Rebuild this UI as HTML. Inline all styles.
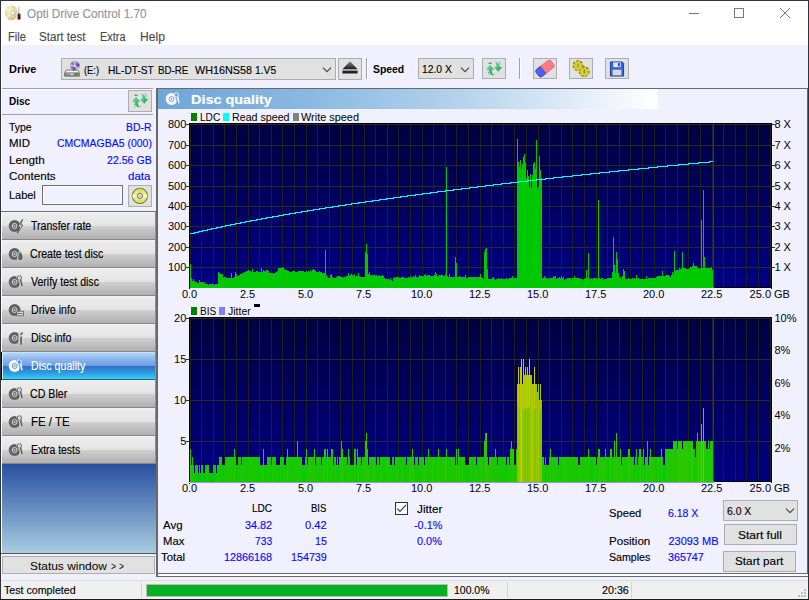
<!DOCTYPE html>
<html><head><meta charset="utf-8"><title>Opti Drive Control 1.70</title>
<style>
html,body{margin:0;padding:0;}
body{width:809px;height:600px;overflow:hidden;position:relative;background:#f0f0ff;font-family:"Liberation Sans",sans-serif;}
.b{position:absolute;display:block;}
.t{position:absolute;white-space:pre;line-height:normal;transform-origin:0 50%;}
.s{-webkit-text-stroke:0.14px currentColor;}
</style></head><body>
<div class="b" style="left:0px;top:0px;width:809px;height:600px;background:#f0f0ff;"></div>
<div class="b" style="left:0px;top:0px;width:809px;height:45px;background:#fff;"></div>
<div class="b" style="left:0px;top:45px;width:809px;height:1px;background:#f0f0f0;"></div>
<span class="t s" style="left:26.50px;top:6.94px;font-size:12px;color:#94949c;transform:scaleX(0.9800);">Opti Drive Control 1.70</span>
<span class="t s" style="left:7.90px;top:30.34px;font-size:12px;color:#4a4a4a;transform:scaleX(0.9258);">File</span>
<span class="t s" style="left:39.40px;top:30.34px;font-size:12px;color:#4a4a4a;transform:scaleX(0.9684);">Start test</span>
<span class="t s" style="left:100.00px;top:30.34px;font-size:12px;color:#4a4a4a;transform:scaleX(0.9105);">Extra</span>
<span class="t s" style="left:140.00px;top:30.34px;font-size:12px;color:#4a4a4a;transform:scaleX(1.0090);">Help</span>
<svg class="b" style="left:680px;top:0" width="128" height="30" viewBox="0 0 128 30">
<g stroke="#7a7a7a" stroke-width="1" fill="none" shape-rendering="crispEdges">
<line x1="9" y1="13.5" x2="19" y2="13.5"/>
<rect x="54.5" y="8.5" width="9" height="9"/></g>
<g stroke="#7a7a7a" stroke-width="1" fill="none"><line x1="100" y1="8" x2="110" y2="18"/><line x1="110" y1="8" x2="100" y2="18"/></g></svg>
<svg class="b" style="left:4px;top:4px" width="18" height="18" viewBox="4 4 18 18">
<defs><radialGradient id="tg" cx="0.42" cy="0.42" r="0.62"><stop offset="0" stop-color="#fff8d8"/><stop offset="0.55" stop-color="#eadf9f"/><stop offset="1" stop-color="#c8b878"/></radialGradient></defs>
<ellipse cx="11.3" cy="12.8" rx="6.3" ry="7.4" fill="url(#tg)"/>
<path d="M11.3 12.8 L5.4 9.4 L6.6 7.6 Z M11.3 12.8 L8.6 5.8 L11 5.4 Z M11.3 12.8 L7.2 19 L5.8 17 Z" fill="#fffbe6" opacity="0.7"/>
<circle cx="12.5" cy="12.8" r="2.1" fill="#f8f8f8" stroke="#b0b0b0" stroke-width="0.7"/><circle cx="12.6" cy="12.8" r="0.8" fill="#fff"/>
<path d="M15.6 7.4 L16.3 7.2 L16.9 20 L16.2 20.2 Z" fill="#fafafa" stroke="#c8c8c8" stroke-width="0.3"/>
<path d="M18.7 6.4 L19.3 6.4 L19.2 13.6 L18.3 13.6 Z" fill="#9a9a9a"/>
<path d="M17.7 13.8 Q19 13 20.3 13.8 L20.6 19 Q19 20.2 17.6 19.2 Z" fill="#5a0a08"/>
</svg>
<span class="t" style="left:9.10px;top:62.84px;font-size:11px;color:#000;font-weight:bold;transform:scaleX(0.9922);">Drive</span>
<div class="b" style="left:61px;top:58px;width:275px;height:22px;background:#e1e1e1;border:1px solid #adadad;box-sizing:border-box;"></div>
<span class="t s" style="left:84.00px;top:63.59px;font-size:11.5px;color:#000;transform:scaleX(0.8098);">(E:)</span>
<span class="t s" style="left:107.80px;top:63.59px;font-size:11.5px;color:#000;transform:scaleX(0.8851);">HL-DT-ST</span>
<span class="t s" style="left:158.40px;top:63.59px;font-size:11.5px;color:#000;transform:scaleX(0.8468);">BD-RE</span>
<span class="t s" style="left:195.10px;top:63.59px;font-size:11.5px;color:#000;transform:scaleX(0.9371);">WH16NS58</span>
<span class="t s" style="left:255.20px;top:63.59px;font-size:11.5px;color:#000;transform:scaleX(0.8962);">1.V5</span>
<svg class="b" style="left:322px;top:67.2px" width="10" height="6" viewBox="0 0 10 6"><path d="M1 0.7 L5 4.7 L9 0.7" fill="none" stroke="#444" stroke-width="1.1"/></svg>
<svg class="b" style="left:64px;top:61px" width="16" height="16" viewBox="0 0 16 16">
<path d="M2.4 9 L13.6 9 L15.6 11.4 L15.6 15.2 L0.6 15.2 L0.6 11.4 Z" fill="#f4f4f4" stroke="#5a5a5a" stroke-width="0.8"/>
<rect x="1" y="11.4" width="14.2" height="3.6" fill="#7c7c7c"/>
<rect x="2.4" y="12.4" width="7.4" height="1.2" fill="#b4b4b4"/><rect x="6.6" y="13" width="2.8" height="1" fill="#f0f0f0"/>
<path d="M12.4 11.6 L13.6 12.8 L12.4 14 L11.2 12.8 Z" fill="#10d810" stroke="#0a900a" stroke-width="0.5"/>
<path d="M8.8 0.2 L12.8 0.2 L15.4 2.8 L15.4 6.6 L12.8 9.4 L8.8 9.4 L6.2 6.6 L6.2 2.8 Z" fill="#8a72bc"/>
<path d="M10.8 4.8 L8.8 0.2 L12.8 0.2 Z M10.8 4.8 L15.4 6.6 L12.8 9.4 Z M10.8 4.8 L6.2 6.6 L6.2 2.8Z" fill="#c4b4e6"/>
<path d="M10.8 4.8 L15.4 2.8 L15.4 5 Z M10.8 4.8 L8.8 9.4 L10.6 9.4Z" fill="#5c4690"/>
<circle cx="10.8" cy="4.8" r="1.1" fill="#f4f0ff"/></svg>
<div class="b" style="left:338px;top:58px;width:24px;height:22px;background:#e1e1e1;border:1px solid #adadad;box-sizing:border-box;"></div>
<svg class="b" style="left:338px;top:58px" width="24" height="22" viewBox="0 0 24 22">
<defs><linearGradient id="ej" x1="0" y1="0" x2="0" y2="1"><stop offset="0" stop-color="#8a8a8a"/><stop offset="1" stop-color="#1a1a1a"/></linearGradient></defs>
<path d="M12 3.2 L19.6 11.2 L4.4 11.2 Z" fill="url(#ej)"/><rect x="4.4" y="12.6" width="15.2" height="2.9" fill="#222"/></svg>
<div class="b" style="left:366px;top:58px;width:1px;height:21px;background:#a0a0a0;"></div>
<div class="b" style="left:367px;top:58px;width:1px;height:21px;background:#fff;"></div>
<span class="t" style="left:373.00px;top:62.84px;font-size:11px;color:#000;font-weight:bold;transform:scaleX(0.9452);">Speed</span>
<div class="b" style="left:418px;top:58px;width:56px;height:21px;background:#e1e1e1;border:1px solid #adadad;box-sizing:border-box;"></div>
<span class="t s" style="left:422.40px;top:63.09px;font-size:11.5px;color:#000;transform:scaleX(0.8964);">12.0 X</span>
<svg class="b" style="left:460px;top:67px" width="10" height="6" viewBox="0 0 10 6"><path d="M1 0.7 L5 4.7 L9 0.7" fill="none" stroke="#444" stroke-width="1.1"/></svg>
<div class="b" style="left:482px;top:58px;width:24px;height:21px;background:#e1e1e1;border:1px solid #adadad;box-sizing:border-box;"></div>
<svg class="b" style="left:485px;top:59.5px" width="18" height="18" viewBox="0 0 18 18">
<defs><linearGradient id="rg1" x1="0" y1="0" x2="1" y2="1"><stop offset="0" stop-color="#7ae8a8"/><stop offset="1" stop-color="#08a048"/></linearGradient></defs>
<path d="M5.1 4.8 L9.3 9.8 L6.7 9.8 Q6.8 13 8.6 15.8 Q4 14.6 3.5 9.8 L0.8 9.8 Z" fill="url(#rg1)"/>
<path d="M13.3 11.8 L8.8 7 L11.5 7 Q11.6 3.8 9.8 1.2 Q14.4 2.2 14.8 7 L17.2 7 Z" fill="url(#rg1)"/>
<path d="M3.6 3.2 H6.6" stroke="#444" stroke-width="0.9" fill="none"/><path d="M3.2 12 L4.6 15.4 M9.4 13.6 L9.8 14.8 M14.4 1.6 L15.6 4.4" stroke="#555" stroke-width="0.7" stroke-dasharray="1 1" fill="none"/></svg>
<div class="b" style="left:519px;top:58px;width:1px;height:21px;background:#a0a0a0;"></div>
<div class="b" style="left:520px;top:58px;width:1px;height:21px;background:#fff;"></div>
<div class="b" style="left:533px;top:58px;width:24px;height:21px;background:#e1e1e1;border:1px solid #adadad;box-sizing:border-box;"></div>
<svg class="b" style="left:535px;top:59px" width="20" height="19" viewBox="0 0 20 19">
<g transform="rotate(-38 10 9.5)"><rect x="0.6" y="5" width="18.8" height="9" rx="2.4" fill="#ff7a86" stroke="#d05868" stroke-width="0.6"/>
<path d="M0.6 7.4 Q0.6 5 3 5 L7.6 5 L7.6 14 L3 14 Q0.6 14 0.6 11.6 Z" fill="#4a60f8" stroke="#2838b0" stroke-width="0.6"/></g></svg>
<div class="b" style="left:569px;top:58px;width:24px;height:21px;background:#e1e1e1;border:1px solid #adadad;box-sizing:border-box;"></div>
<svg class="b" style="left:571px;top:59px" width="20" height="19" viewBox="0 0 20 19">
<g fill="#d8cc18" stroke="#7a7000" stroke-width="1">
<circle cx="7" cy="6.6" r="3.9" stroke="#7a7200" stroke-dasharray="2.2 1.1" stroke-width="3" fill="#e0d618"/>
<circle cx="13.2" cy="12.6" r="3.9" stroke="#7a7200" stroke-dasharray="2.2 1.1" stroke-width="3" fill="#e0d618"/>
<circle cx="7" cy="6.6" r="3.7" stroke="#dcd214" stroke-dasharray="2.2 1.1" stroke-width="1.8" fill="#dcd214"/>
<circle cx="13.2" cy="12.6" r="3.7" stroke="#dcd214" stroke-dasharray="2.2 1.1" stroke-width="1.8" fill="#dcd214"/></g>
<rect x="6.3" y="4.4" width="1.5" height="4" fill="#666" stroke="#ccc" stroke-width="0.4"/><rect x="12.5" y="10.4" width="1.5" height="4" fill="#666" stroke="#ccc" stroke-width="0.4"/></svg>
<div class="b" style="left:605px;top:58px;width:24px;height:21px;background:#e1e1e1;border:1px solid #adadad;box-sizing:border-box;"></div>
<svg class="b" style="left:609px;top:60.5px" width="16" height="16" viewBox="0 0 16 17">
<path d="M1 1 L13.5 1 L15 2.5 L15 16 L1 16 Z" fill="#2a66e8" stroke="#1838a0" stroke-width="1"/>
<rect x="4" y="1.5" width="8" height="5" fill="#dfe8ff"/><rect x="9" y="2.2" width="2" height="3.4" fill="#2a48b0"/>
<rect x="3" y="9" width="10" height="6.5" fill="#d8d8d8" stroke="#667" stroke-width="0.5"/></svg>
<div class="b" style="left:1px;top:88px;width:152px;height:1px;background:#a0a0a0;"></div>
<div class="b" style="left:1px;top:89px;width:152px;height:1px;background:#fff;"></div>
<div class="b" style="left:1px;top:45px;width:1px;height:535px;background:#fff;"></div>
<span class="t" style="left:9.10px;top:95.05px;font-size:11px;color:#000;font-weight:bold;transform:scaleX(0.9081);">Disc</span>
<div class="b" style="left:128px;top:90px;width:24px;height:22px;background:#e1e1e1;border:1px solid #adadad;box-sizing:border-box;"></div>
<svg class="b" style="left:131px;top:92px" width="18" height="18" viewBox="0 0 18 18">
<defs><linearGradient id="rg2" x1="0" y1="0" x2="1" y2="1"><stop offset="0" stop-color="#7ae8a8"/><stop offset="1" stop-color="#08a048"/></linearGradient></defs>
<path d="M5.1 4.8 L9.3 9.8 L6.7 9.8 Q6.8 13 8.6 15.8 Q4 14.6 3.5 9.8 L0.8 9.8 Z" fill="url(#rg2)"/>
<path d="M13.3 11.8 L8.8 7 L11.5 7 Q11.6 3.8 9.8 1.2 Q14.4 2.2 14.8 7 L17.2 7 Z" fill="url(#rg2)"/>
<path d="M3.6 3.2 H6.6" stroke="#444" stroke-width="0.9" fill="none"/><path d="M3.2 12 L4.6 15.4 M9.4 13.6 L9.8 14.8 M14.4 1.6 L15.6 4.4" stroke="#555" stroke-width="0.7" stroke-dasharray="1 1" fill="none"/></svg>
<div class="b" style="left:2px;top:114px;width:151px;height:1px;background:#a0a0a0;"></div>
<span class="t s" style="left:8.90px;top:120.85px;font-size:11px;color:#000;transform:scaleX(0.9478);">Type</span>
<span class="t s" style="left:126.00px;top:120.85px;font-size:11px;color:#0a0aff;transform:scaleX(0.9484);">BD-R</span>
<span class="t s" style="left:8.90px;top:137.24px;font-size:11px;color:#000;transform:scaleX(1.0415);">MID</span>
<span class="t s" style="left:57.20px;top:137.24px;font-size:11px;color:#0a0aff;transform:scaleX(0.9525);">CMCMAGBA5 (000)</span>
<span class="t s" style="left:8.90px;top:153.84px;font-size:11px;color:#000;transform:scaleX(1.0642);">Length</span>
<span class="t s" style="left:106.80px;top:153.84px;font-size:11px;color:#0a0aff;transform:scaleX(0.9618);">22.56 GB</span>
<span class="t s" style="left:8.90px;top:169.84px;font-size:11px;color:#000;transform:scaleX(1.0608);">Contents</span>
<span class="t s" style="left:128.40px;top:169.84px;font-size:11px;color:#0a0aff;transform:scaleX(1.0511);">data</span>
<span class="t s" style="left:8.90px;top:189.04px;font-size:11px;color:#000;">Label</span>
<div class="b" style="left:42px;top:185px;width:81px;height:20px;background:#f0f0ff;border:1px solid #6e6e6e;box-shadow:inset 0 0 0 1px #fff;box-sizing:border-box;"></div>
<div class="b" style="left:128px;top:185px;width:24px;height:22px;background:#e1e1e1;border:1px solid #adadad;box-sizing:border-box;"></div>
<svg class="b" style="left:131px;top:187px" width="18" height="18" viewBox="0 0 18 18">
<defs><radialGradient id="yg" cx="0.5" cy="0.5" r="0.5"><stop offset="0" stop-color="#f4f4a8"/><stop offset="0.75" stop-color="#e6e67c"/><stop offset="1" stop-color="#c8c85a"/></radialGradient></defs>
<circle cx="8.9" cy="8.9" r="7.7" fill="url(#yg)" stroke="#5a5a30" stroke-width="0.9"/>
<path d="M8.9 8.9 L1.4 6.4 L1.4 11.4 Z M8.9 8.9 L16.4 6.4 L16.4 11.4 Z" fill="#fdfdc8" opacity="0.75"/>
<path d="M8.9 8.9 L6.6 1.6 L11.2 1.6 Z M8.9 8.9 L6.6 16.2 L11.2 16.2 Z" fill="#d4d45c" opacity="0.6"/>
<circle cx="8.9" cy="8.9" r="2.6" fill="#e4e8e0" stroke="#5c6c68" stroke-width="0.9"/><circle cx="8.9" cy="8.9" r="1.2" fill="#d0d0d0"/></svg>
<div class="b" style="left:1px;top:211px;width:155px;height:1px;background:#707070;"></div>
<div class="b" style="left:2px;top:212px;width:154px;height:27px;background:linear-gradient(#f6f6f6 0,#ededed 4%,#e4e4e4 50%,#d0d0d0 52%,#b0b0b0 100%);"></div>
<div class="b" style="left:2px;top:239px;width:154px;height:1px;background:#858585;"></div>
<svg class="b" style="left:7.2px;top:217.2px" width="20" height="18" viewBox="0 0 20 18"><circle cx="7.6" cy="9" r="5.9" fill="#626262"/><circle cx="7.6" cy="9" r="2.5" fill="none" stroke="#dcdcdc" stroke-width="1"/><circle cx="7.6" cy="9" r="0.9" fill="#dcdcdc"/><path d="M15.6 2.2 L10.6 9.8 L12.6 9.8 L10.4 16.2 L15.8 8 L13.6 8 Z" fill="#dcdcdc" stroke="#333" stroke-width="0.7"/></svg>
<span class="t s" style="left:30.60px;top:218.84px;font-size:12px;color:#000;transform:scaleX(0.8822);">Transfer rate</span>
<div class="b" style="left:2px;top:240px;width:154px;height:27px;background:linear-gradient(#f6f6f6 0,#ededed 4%,#e4e4e4 50%,#d0d0d0 52%,#b0b0b0 100%);"></div>
<div class="b" style="left:2px;top:267px;width:154px;height:1px;background:#858585;"></div>
<svg class="b" style="left:7.2px;top:245.2px" width="20" height="18" viewBox="0 0 20 18"><circle cx="7.6" cy="9" r="5.9" fill="#626262"/><circle cx="7.6" cy="9" r="2.5" fill="none" stroke="#dcdcdc" stroke-width="1"/><circle cx="7.6" cy="9" r="0.9" fill="#dcdcdc"/><path d="M12.6 5.5 Q16.6 9.5 16.2 13 Q15.6 16.4 12.8 15.8 Q10 15 10.6 12 Q11.2 10 12.6 5.5Z" fill="#626262" stroke="#dcdcdc" stroke-width="0.9"/></svg>
<span class="t s" style="left:30.00px;top:246.84px;font-size:12px;color:#000;transform:scaleX(0.8805);">Create test disc</span>
<div class="b" style="left:2px;top:268px;width:154px;height:27px;background:linear-gradient(#f6f6f6 0,#ededed 4%,#e4e4e4 50%,#d0d0d0 52%,#b0b0b0 100%);"></div>
<div class="b" style="left:2px;top:295px;width:154px;height:1px;background:#858585;"></div>
<svg class="b" style="left:7.2px;top:273.2px" width="20" height="18" viewBox="0 0 20 18"><circle cx="7.6" cy="9" r="5.9" fill="#626262"/><circle cx="7.6" cy="9" r="2.5" fill="none" stroke="#dcdcdc" stroke-width="1"/><circle cx="7.6" cy="9" r="0.9" fill="#dcdcdc"/><path d="M9 3.5 L14.5 2 L15 6.5 L11.5 8.5 Z" fill="#dcdcdc"/><circle cx="12.4" cy="5" r="2.2" fill="#dcdcdc" stroke="#626262" stroke-width="0.9"/><path d="M13.6 7 L15 13.2" stroke="#626262" stroke-width="1.5" fill="none"/><path d="M12.4 7.6 L13.4 13.4" stroke="#dcdcdc" stroke-width="1" fill="none"/></svg>
<span class="t s" style="left:30.60px;top:274.84px;font-size:12px;color:#000;transform:scaleX(0.8777);">Verify test disc</span>
<div class="b" style="left:2px;top:296px;width:154px;height:27px;background:linear-gradient(#f6f6f6 0,#ededed 4%,#e4e4e4 50%,#d0d0d0 52%,#b0b0b0 100%);"></div>
<div class="b" style="left:2px;top:323px;width:154px;height:1px;background:#858585;"></div>
<svg class="b" style="left:7.2px;top:301.2px" width="20" height="18" viewBox="0 0 20 18"><circle cx="7.6" cy="9" r="5.9" fill="#626262"/><circle cx="7.6" cy="9" r="2.5" fill="none" stroke="#dcdcdc" stroke-width="1"/><circle cx="7.6" cy="9" r="0.9" fill="#dcdcdc"/><rect x="10" y="10.2" width="6.6" height="4.6" fill="#dcdcdc" stroke="#626262" stroke-width="0.8"/><path d="M11.2 12.5 H15.4" stroke="#626262" stroke-width="1"/></svg>
<span class="t s" style="left:30.60px;top:302.84px;font-size:12px;color:#000;transform:scaleX(0.8840);">Drive info</span>
<div class="b" style="left:2px;top:324px;width:154px;height:27px;background:linear-gradient(#f6f6f6 0,#ededed 4%,#e4e4e4 50%,#d0d0d0 52%,#b0b0b0 100%);"></div>
<div class="b" style="left:2px;top:351px;width:154px;height:1px;background:#858585;"></div>
<svg class="b" style="left:7.2px;top:329.2px" width="20" height="18" viewBox="0 0 20 18"><circle cx="7.6" cy="9" r="5.9" fill="#626262"/><circle cx="7.6" cy="9" r="2.5" fill="none" stroke="#dcdcdc" stroke-width="1"/><circle cx="7.6" cy="9" r="0.9" fill="#dcdcdc"/><path d="M11.4 3 H16.4 V16 H11.4Z" fill="#dcdcdc" opacity="0.9"/><rect x="13.2" y="7.6" width="1.8" height="7" fill="#626262"/><path d="M12.2 15 H16" stroke="#626262" stroke-width="1"/><path d="M13.4 5.8 L15.6 3.6" stroke="#626262" stroke-width="1.6"/></svg>
<span class="t s" style="left:30.60px;top:330.84px;font-size:12px;color:#000;transform:scaleX(0.8780);">Disc info</span>
<div class="b" style="left:2px;top:352px;width:154px;height:27px;background:linear-gradient(#c4f0ff 0,#b6dafa 4%,#a4c8f4 12%,#6c9ce4 51%,#2e70ca 53%,#30a0e0 80%,#30d4f8 100%);"></div>
<div class="b" style="left:2px;top:379px;width:154px;height:1px;background:#305880;"></div>
<div class="b" style="left:1px;top:352px;width:1px;height:28px;background:#000;"></div>
<div class="b" style="left:2px;top:352px;width:1px;height:27px;background:#c8f8ff;"></div>
<svg class="b" style="left:7.2px;top:357.2px" width="20" height="18" viewBox="0 0 20 18"><circle cx="7.6" cy="9" r="5.9" fill="#fff"/><circle cx="7.6" cy="9" r="2.5" fill="none" stroke="#5a90dc" stroke-width="1"/><circle cx="7.6" cy="9" r="0.9" fill="#5a90dc"/><path d="M9 3.5 L14.5 2 L15 6.5 L11.5 8.5 Z" fill="#5a90dc"/><circle cx="12.4" cy="5" r="2.2" fill="#5a90dc" stroke="#fff" stroke-width="0.9"/><path d="M13.6 7 L15 13.2" stroke="#fff" stroke-width="1.5" fill="none"/><path d="M12.4 7.6 L13.4 13.4" stroke="#5a90dc" stroke-width="1" fill="none"/></svg>
<span class="t s" style="left:30.90px;top:358.84px;font-size:12px;color:#fff;transform:scaleX(0.8851);">Disc quality</span>
<div class="b" style="left:2px;top:380px;width:154px;height:27px;background:linear-gradient(#f6f6f6 0,#ededed 4%,#e4e4e4 50%,#d0d0d0 52%,#b0b0b0 100%);"></div>
<div class="b" style="left:2px;top:407px;width:154px;height:1px;background:#858585;"></div>
<svg class="b" style="left:7.2px;top:385.2px" width="20" height="18" viewBox="0 0 20 18"><circle cx="7.6" cy="9" r="5.9" fill="#626262"/><circle cx="7.6" cy="9" r="2.5" fill="none" stroke="#dcdcdc" stroke-width="1"/><circle cx="7.6" cy="9" r="0.9" fill="#dcdcdc"/><path d="M9 3.5 L14.5 2 L15 6.5 L11.5 8.5 Z" fill="#dcdcdc"/><circle cx="12.4" cy="5" r="2.2" fill="#dcdcdc" stroke="#626262" stroke-width="0.9"/><path d="M13.6 7 L15 13.2" stroke="#626262" stroke-width="1.5" fill="none"/><path d="M12.4 7.6 L13.4 13.4" stroke="#dcdcdc" stroke-width="1" fill="none"/></svg>
<span class="t s" style="left:30.00px;top:386.84px;font-size:12px;color:#000;transform:scaleX(0.8856);">CD Bler</span>
<div class="b" style="left:2px;top:408px;width:154px;height:27px;background:linear-gradient(#f6f6f6 0,#ededed 4%,#e4e4e4 50%,#d0d0d0 52%,#b0b0b0 100%);"></div>
<div class="b" style="left:2px;top:435px;width:154px;height:1px;background:#858585;"></div>
<svg class="b" style="left:7.2px;top:413.2px" width="20" height="18" viewBox="0 0 20 18"><circle cx="7.6" cy="9" r="5.9" fill="#626262"/><circle cx="7.6" cy="9" r="2.5" fill="none" stroke="#dcdcdc" stroke-width="1"/><circle cx="7.6" cy="9" r="0.9" fill="#dcdcdc"/><path d="M9 3.5 L14.5 2 L15 6.5 L11.5 8.5 Z" fill="#dcdcdc"/><circle cx="12.4" cy="5" r="2.2" fill="#dcdcdc" stroke="#626262" stroke-width="0.9"/><path d="M13.6 7 L15 13.2" stroke="#626262" stroke-width="1.5" fill="none"/><path d="M12.4 7.6 L13.4 13.4" stroke="#dcdcdc" stroke-width="1" fill="none"/></svg>
<span class="t s" style="left:30.60px;top:414.84px;font-size:12px;color:#000;transform:scaleX(0.9542);">FE / TE</span>
<div class="b" style="left:2px;top:436px;width:154px;height:27px;background:linear-gradient(#f6f6f6 0,#ededed 4%,#e4e4e4 50%,#d0d0d0 52%,#b0b0b0 100%);"></div>
<div class="b" style="left:2px;top:463px;width:154px;height:1px;background:#858585;"></div>
<svg class="b" style="left:7.2px;top:441.2px" width="20" height="18" viewBox="0 0 20 18"><circle cx="7.6" cy="9" r="5.9" fill="#626262"/><circle cx="7.6" cy="9" r="2.5" fill="none" stroke="#dcdcdc" stroke-width="1"/><circle cx="7.6" cy="9" r="0.9" fill="#dcdcdc"/><path d="M9 3.5 L14.5 2 L15 6.5 L11.5 8.5 Z" fill="#dcdcdc"/><circle cx="12.4" cy="5" r="2.2" fill="#dcdcdc" stroke="#626262" stroke-width="0.9"/><path d="M13.6 7 L15 13.2" stroke="#626262" stroke-width="1.5" fill="none"/><path d="M12.4 7.6 L13.4 13.4" stroke="#dcdcdc" stroke-width="1" fill="none"/></svg>
<span class="t s" style="left:30.60px;top:442.84px;font-size:12px;color:#000;transform:scaleX(0.8662);">Extra tests</span>
<div class="b" style="left:155px;top:212px;width:1px;height:252px;background:#909090;"></div>
<div class="b" style="left:2px;top:464px;width:154px;height:89px;background:linear-gradient(#2850a0,#a8cce0);"></div>
<div class="b" style="left:1px;top:553px;width:155px;height:1px;background:#555;"></div>
<div class="b" style="left:2px;top:556px;width:153px;height:18px;background:#e1e1e1;border:1px solid #adadad;box-sizing:border-box;"></div>
<span class="t" style="left:30.10px;top:559.75px;font-size:11px;color:#000;transform:scaleX(1.0843);">Status window</span>
<span class="t" style="left:111.00px;top:559.75px;font-size:11px;color:#000;transform:scaleX(0.7782);">&gt;</span>
<span class="t" style="left:119.30px;top:559.75px;font-size:11px;color:#000;transform:scaleX(0.7782);">&gt;</span>
<div class="b" style="left:156px;top:88px;width:652px;height:1px;background:#696969;"></div>
<div class="b" style="left:156px;top:88px;width:2px;height:489px;background:#696969;"></div>
<div class="b" style="left:807px;top:88px;width:1px;height:486px;background:#696969;"></div>
<div class="b" style="left:158px;top:573px;width:650px;height:1px;background:#696969;"></div>
<div class="b" style="left:158px;top:574px;width:649px;height:2px;background:#fff;"></div>
<div class="b" style="left:156px;top:576px;width:652px;height:1px;background:#696969;"></div>
<div class="b" style="left:158px;top:89px;width:500px;height:20px;background:linear-gradient(90deg,#6fa5d8 0,#8ab8e2 30%,#b4d2ec 60%,#ffffff 100%);"></div>
<svg class="b" style="left:164px;top:90px" width="20" height="18" viewBox="0 0 20 18"><circle cx="7.6" cy="9" r="5.9" fill="#fff"/><circle cx="7.6" cy="9" r="2.5" fill="none" stroke="#6fa5d8" stroke-width="1"/><circle cx="7.6" cy="9" r="0.9" fill="#6fa5d8"/><path d="M9 3.5 L14.5 2 L15 6.5 L11.5 8.5 Z" fill="#6fa5d8"/><circle cx="12.4" cy="5" r="2.2" fill="#6fa5d8" stroke="#fff" stroke-width="0.9"/><path d="M13.6 7 L15 13.2" stroke="#fff" stroke-width="1.5" fill="none"/><path d="M12.4 7.6 L13.4 13.4" stroke="#6fa5d8" stroke-width="1" fill="none"/></svg>
<span class="t s" style="left:190.90px;top:92.03px;font-size:13px;color:#fff;font-weight:bold;transform:scaleX(1.1074);">Disc quality</span>
<svg class="b" style="left:189px;top:123px" width="583" height="166" viewBox="189 123 583 166" shape-rendering="crispEdges"><defs><linearGradient id="bg1" x1="0" y1="0" x2="0" y2="1"><stop offset="0" stop-color="#000040"/><stop offset="1" stop-color="#000084"/></linearGradient></defs><rect x="189" y="123" width="583" height="165" fill="url(#bg1)"/><rect x="190" y="124" width="1" height="164" fill="#1f1f1f"/><rect x="201" y="124" width="1" height="164" fill="#1f1f1f"/><rect x="213" y="124" width="1" height="164" fill="#1f1f1f"/><rect x="224" y="124" width="1" height="164" fill="#1f1f1f"/><rect x="236" y="124" width="1" height="164" fill="#1f1f1f"/><rect x="248" y="124" width="1" height="164" fill="#1f1f1f"/><rect x="259" y="124" width="1" height="164" fill="#1f1f1f"/><rect x="271" y="124" width="1" height="164" fill="#1f1f1f"/><rect x="282" y="124" width="1" height="164" fill="#1f1f1f"/><rect x="294" y="124" width="1" height="164" fill="#1f1f1f"/><rect x="306" y="124" width="1" height="164" fill="#1f1f1f"/><rect x="317" y="124" width="1" height="164" fill="#1f1f1f"/><rect x="329" y="124" width="1" height="164" fill="#1f1f1f"/><rect x="340" y="124" width="1" height="164" fill="#1f1f1f"/><rect x="352" y="124" width="1" height="164" fill="#1f1f1f"/><rect x="364" y="124" width="1" height="164" fill="#1f1f1f"/><rect x="375" y="124" width="1" height="164" fill="#1f1f1f"/><rect x="387" y="124" width="1" height="164" fill="#1f1f1f"/><rect x="398" y="124" width="1" height="164" fill="#1f1f1f"/><rect x="410" y="124" width="1" height="164" fill="#1f1f1f"/><rect x="422" y="124" width="1" height="164" fill="#1f1f1f"/><rect x="433" y="124" width="1" height="164" fill="#1f1f1f"/><rect x="445" y="124" width="1" height="164" fill="#1f1f1f"/><rect x="456" y="124" width="1" height="164" fill="#1f1f1f"/><rect x="468" y="124" width="1" height="164" fill="#1f1f1f"/><rect x="480" y="124" width="1" height="164" fill="#1f1f1f"/><rect x="491" y="124" width="1" height="164" fill="#1f1f1f"/><rect x="503" y="124" width="1" height="164" fill="#1f1f1f"/><rect x="514" y="124" width="1" height="164" fill="#1f1f1f"/><rect x="526" y="124" width="1" height="164" fill="#1f1f1f"/><rect x="538" y="124" width="1" height="164" fill="#1f1f1f"/><rect x="549" y="124" width="1" height="164" fill="#1f1f1f"/><rect x="561" y="124" width="1" height="164" fill="#1f1f1f"/><rect x="572" y="124" width="1" height="164" fill="#1f1f1f"/><rect x="584" y="124" width="1" height="164" fill="#1f1f1f"/><rect x="596" y="124" width="1" height="164" fill="#1f1f1f"/><rect x="607" y="124" width="1" height="164" fill="#1f1f1f"/><rect x="619" y="124" width="1" height="164" fill="#1f1f1f"/><rect x="630" y="124" width="1" height="164" fill="#1f1f1f"/><rect x="642" y="124" width="1" height="164" fill="#1f1f1f"/><rect x="654" y="124" width="1" height="164" fill="#1f1f1f"/><rect x="665" y="124" width="1" height="164" fill="#1f1f1f"/><rect x="677" y="124" width="1" height="164" fill="#1f1f1f"/><rect x="688" y="124" width="1" height="164" fill="#1f1f1f"/><rect x="700" y="124" width="1" height="164" fill="#1f1f1f"/><rect x="712" y="124" width="1" height="164" fill="#1f1f1f"/><rect x="723" y="124" width="1" height="164" fill="#1f1f1f"/><rect x="735" y="124" width="1" height="164" fill="#1f1f1f"/><rect x="746" y="124" width="1" height="164" fill="#1f1f1f"/><rect x="758" y="124" width="1" height="164" fill="#1f1f1f"/><rect x="770" y="124" width="1" height="164" fill="#1f1f1f"/><rect x="190" y="124" width="581" height="1" fill="#2a2a24"/><rect x="190" y="145" width="581" height="1" fill="#2a2a24"/><rect x="190" y="165" width="581" height="1" fill="#2a2a24"/><rect x="190" y="186" width="581" height="1" fill="#2a2a24"/><rect x="190" y="206" width="581" height="1" fill="#2a2a24"/><rect x="190" y="226" width="581" height="1" fill="#2a2a24"/><rect x="190" y="247" width="581" height="1" fill="#2a2a24"/><rect x="190" y="267" width="581" height="1" fill="#2a2a24"/><rect x="189" y="287" width="583" height="1" fill="#000"/><path d="M190 288V264h1V288zM191 288V278h1V288zM192 288V281h1V288zM193 288V279h1V288zM194 288V281h1V288zM195 288V282h1V288zM196 288V282h1V288zM197 288V283h1V288zM198 288V283h1V288zM199 288V280h1V288zM200 288V282h1V288zM201 288V282h1V288zM202 288V282h1V288zM203 288V283h1V288zM204 288V282h1V288zM205 288V284h1V288zM206 288V284h1V288zM207 288V284h1V288zM208 288V285h1V288zM209 288V284h1V288zM210 288V284h1V288zM211 288V284h1V288zM212 288V284h1V288zM213 288V284h1V288zM214 288V285h1V288zM215 288V284h1V288zM216 288V284h1V288zM217 288V284h1V288zM218 288V272h1V288zM219 288V273h1V288zM220 288V274h1V288zM221 288V274h1V288zM222 288V274h1V288zM223 288V278h1V288zM224 288V277h1V288zM225 288V277h1V288zM226 288V278h1V288zM227 288V278h1V288zM228 288V278h1V288zM229 288V278h1V288zM230 288V278h1V288zM231 288V273h1V288zM232 288V278h1V288zM233 288V278h1V288zM234 288V277h1V288zM235 288V272h1V288zM236 288V274h1V288zM237 288V276h1V288zM238 288V276h1V288zM239 288V275h1V288zM240 288V274h1V288zM241 288V274h1V288zM242 288V273h1V288zM243 288V273h1V288zM244 288V272h1V288zM245 288V272h1V288zM246 288V271h1V288zM247 288V271h1V288zM248 288V270h1V288zM249 288V271h1V288zM250 288V271h1V288zM251 288V272h1V288zM252 288V269h1V288zM253 288V272h1V288zM254 288V272h1V288zM255 288V272h1V288zM256 288V271h1V288zM257 288V271h1V288zM258 288V272h1V288zM259 288V272h1V288zM260 288V272h1V288zM261 288V268h1V288zM262 288V272h1V288zM263 288V270h1V288zM264 288V271h1V288zM265 288V272h1V288zM266 288V270h1V288zM267 288V270h1V288zM268 288V271h1V288zM269 288V273h1V288zM270 288V273h1V288zM271 288V273h1V288zM272 288V273h1V288zM273 288V274h1V288zM274 288V273h1V288zM275 288V273h1V288zM276 288V272h1V288zM277 288V271h1V288zM278 288V268h1V288zM279 288V268h1V288zM280 288V268h1V288zM281 288V268h1V288zM282 288V267h1V288zM283 288V268h1V288zM284 288V269h1V288zM285 288V270h1V288zM286 288V270h1V288zM287 288V271h1V288zM288 288V271h1V288zM289 288V272h1V288zM290 288V272h1V288zM291 288V272h1V288zM292 288V271h1V288zM293 288V271h1V288zM294 288V271h1V288zM295 288V272h1V288zM296 288V272h1V288zM297 288V272h1V288zM298 288V271h1V288zM299 288V271h1V288zM300 288V271h1V288zM301 288V271h1V288zM302 288V271h1V288zM303 288V271h1V288zM304 288V272h1V288zM305 288V272h1V288zM306 288V271h1V288zM307 288V272h1V288zM308 288V271h1V288zM309 288V272h1V288zM310 288V270h1V288zM311 288V272h1V288zM312 288V270h1V288zM313 288V269h1V288zM314 288V270h1V288zM315 288V271h1V288zM316 288V272h1V288zM317 288V272h1V288zM318 288V272h1V288zM319 288V271h1V288zM320 288V272h1V288zM321 288V272h1V288zM322 288V273h1V288zM323 288V273h1V288zM324 288V273h1V288zM325 288V250h1V288zM326 288V275h1V288zM327 288V277h1V288zM328 288V278h1V288zM329 288V278h1V288zM330 288V275h1V288zM331 288V274h1V288zM332 288V277h1V288zM333 288V278h1V288zM334 288V278h1V288zM335 288V278h1V288zM336 288V277h1V288zM337 288V276h1V288zM338 288V276h1V288zM339 288V276h1V288zM340 288V277h1V288zM341 288V277h1V288zM342 288V277h1V288zM343 288V278h1V288zM344 288V277h1V288zM345 288V277h1V288zM346 288V276h1V288zM347 288V276h1V288zM348 288V273h1V288zM349 288V276h1V288zM350 288V275h1V288zM351 288V274h1V288zM352 288V275h1V288zM353 288V276h1V288zM354 288V274h1V288zM355 288V277h1V288zM356 288V276h1V288zM357 288V276h1V288zM358 288V273h1V288zM359 288V276h1V288zM360 288V277h1V288zM361 288V277h1V288zM362 288V277h1V288zM363 288V277h1V288zM364 288V277h1V288zM365 288V252h1V288zM366 288V244h1V288zM367 288V254h1V288zM368 288V274h1V288zM369 288V272h1V288zM370 288V275h1V288zM371 288V276h1V288zM372 288V275h1V288zM373 288V275h1V288zM374 288V275h1V288zM375 288V276h1V288zM376 288V275h1V288zM377 288V276h1V288zM378 288V276h1V288zM379 288V275h1V288zM380 288V276h1V288zM381 288V276h1V288zM382 288V275h1V288zM383 288V276h1V288zM384 288V278h1V288zM385 288V279h1V288zM386 288V279h1V288zM387 288V279h1V288zM388 288V279h1V288zM389 288V280h1V288zM390 288V278h1V288zM391 288V280h1V288zM392 288V281h1V288zM393 288V278h1V288zM394 288V277h1V288zM395 288V278h1V288zM396 288V277h1V288zM397 288V277h1V288zM398 288V277h1V288zM399 288V278h1V288zM400 288V278h1V288zM401 288V277h1V288zM402 288V277h1V288zM403 288V277h1V288zM404 288V278h1V288zM405 288V278h1V288zM406 288V278h1V288zM407 288V278h1V288zM408 288V277h1V288zM409 288V278h1V288zM410 288V276h1V288zM411 288V278h1V288zM412 288V277h1V288zM413 288V276h1V288zM414 288V277h1V288zM415 288V275h1V288zM416 288V277h1V288zM417 288V278h1V288zM418 288V277h1V288zM419 288V275h1V288zM420 288V276h1V288zM421 288V276h1V288zM422 288V276h1V288zM423 288V276h1V288zM424 288V275h1V288zM425 288V274h1V288zM426 288V276h1V288zM427 288V275h1V288zM428 288V275h1V288zM429 288V275h1V288zM430 288V276h1V288zM431 288V276h1V288zM432 288V276h1V288zM433 288V276h1V288zM434 288V275h1V288zM435 288V272h1V288zM436 288V274h1V288zM437 288V276h1V288zM438 288V276h1V288zM439 288V275h1V288zM440 288V275h1V288zM441 288V275h1V288zM442 288V275h1V288zM443 288V276h1V288zM444 288V276h1V288zM445 288V274h1V288zM446 288V167h1V288zM447 288V276h1V288zM448 288V277h1V288zM449 288V274h1V288zM450 288V277h1V288zM451 288V277h1V288zM452 288V277h1V288zM453 288V277h1V288zM454 288V277h1V288zM455 288V257h1V288zM456 288V263h1V288zM457 288V277h1V288zM458 288V277h1V288zM459 288V276h1V288zM460 288V277h1V288zM461 288V277h1V288zM462 288V277h1V288zM463 288V277h1V288zM464 288V277h1V288zM465 288V275h1V288zM466 288V278h1V288zM467 288V278h1V288zM468 288V277h1V288zM469 288V277h1V288zM470 288V277h1V288zM471 288V277h1V288zM472 288V277h1V288zM473 288V277h1V288zM474 288V277h1V288zM475 288V277h1V288zM476 288V277h1V288zM477 288V278h1V288zM478 288V277h1V288zM479 288V277h1V288zM480 288V274h1V288zM481 288V277h1V288zM482 288V278h1V288zM483 288V279h1V288zM484 288V252h1V288zM485 288V249h1V288zM486 288V248h1V288zM487 288V269h1V288zM488 288V279h1V288zM489 288V279h1V288zM490 288V279h1V288zM491 288V279h1V288zM492 288V278h1V288zM493 288V277h1V288zM494 288V279h1V288zM495 288V280h1V288zM496 288V279h1V288zM497 288V279h1V288zM498 288V278h1V288zM499 288V279h1V288zM500 288V279h1V288zM501 288V278h1V288zM502 288V279h1V288zM503 288V279h1V288zM504 288V279h1V288zM505 288V279h1V288zM506 288V278h1V288zM507 288V279h1V288zM508 288V279h1V288zM509 288V278h1V288zM510 288V278h1V288zM511 288V278h1V288zM512 288V276h1V288zM513 288V278h1V288zM514 288V278h1V288zM515 288V278h1V288zM516 288V278h1V288zM517 288V139h1V288zM518 288V162h1V288zM519 288V167h1V288zM520 288V160h1V288zM521 288V169h1V288zM522 288V164h1V288zM523 288V157h1V288zM524 288V154h1V288zM525 288V163h1V288zM526 288V178h1V288zM527 288V170h1V288zM528 288V176h1V288zM529 288V188h1V288zM530 288V174h1V288zM531 288V188h1V288zM532 288V175h1V288zM533 288V164h1V288zM534 288V162h1V288zM535 288V169h1V288zM536 288V140h1V288zM537 288V189h1V288zM538 288V187h1V288zM539 288V156h1V288zM540 288V170h1V288zM541 288V178h1V288zM542 288V278h1V288zM543 288V278h1V288zM544 288V276h1V288zM545 288V278h1V288zM546 288V278h1V288zM547 288V278h1V288zM548 288V279h1V288zM549 288V278h1V288zM550 288V278h1V288zM551 288V278h1V288zM552 288V278h1V288zM553 288V276h1V288zM554 288V277h1V288zM555 288V276h1V288zM556 288V279h1V288zM557 288V278h1V288zM558 288V278h1V288zM559 288V277h1V288zM560 288V278h1V288zM561 288V276h1V288zM562 288V278h1V288zM563 288V277h1V288zM564 288V280h1V288zM565 288V279h1V288zM566 288V279h1V288zM567 288V278h1V288zM568 288V278h1V288zM569 288V278h1V288zM570 288V278h1V288zM571 288V279h1V288zM572 288V278h1V288zM573 288V278h1V288zM574 288V276h1V288zM575 288V278h1V288zM576 288V278h1V288zM577 288V278h1V288zM578 288V278h1V288zM579 288V278h1V288zM580 288V279h1V288zM581 288V279h1V288zM582 288V279h1V288zM583 288V280h1V288zM584 288V279h1V288zM585 288V278h1V288zM586 288V270h1V288zM587 288V278h1V288zM588 288V253h1V288zM589 288V278h1V288zM590 288V279h1V288zM591 288V278h1V288zM592 288V279h1V288zM593 288V278h1V288zM594 288V278h1V288zM595 288V278h1V288zM596 288V278h1V288zM597 288V279h1V288zM598 288V200h1V288zM599 288V278h1V288zM600 288V279h1V288zM601 288V278h1V288zM602 288V278h1V288zM603 288V280h1V288zM604 288V279h1V288zM605 288V279h1V288zM606 288V279h1V288zM607 288V278h1V288zM608 288V278h1V288zM609 288V278h1V288zM610 288V278h1V288zM611 288V278h1V288zM612 288V272h1V288zM613 288V237h1V288zM614 288V265h1V288zM615 288V273h1V288zM616 288V252h1V288zM617 288V259h1V288zM618 288V273h1V288zM619 288V278h1V288zM620 288V277h1V288zM621 288V279h1V288zM622 288V276h1V288zM623 288V269h1V288zM624 288V271h1V288zM625 288V279h1V288zM626 288V279h1V288zM627 288V279h1V288zM628 288V278h1V288zM629 288V279h1V288zM630 288V279h1V288zM631 288V279h1V288zM632 288V278h1V288zM633 288V279h1V288zM634 288V278h1V288zM635 288V279h1V288zM636 288V275h1V288zM637 288V278h1V288zM638 288V278h1V288zM639 288V279h1V288zM640 288V279h1V288zM641 288V279h1V288zM642 288V279h1V288zM643 288V279h1V288zM644 288V279h1V288zM645 288V279h1V288zM646 288V276h1V288zM647 288V279h1V288zM648 288V278h1V288zM649 288V278h1V288zM650 288V278h1V288zM651 288V278h1V288zM652 288V278h1V288zM653 288V278h1V288zM654 288V278h1V288zM655 288V278h1V288zM656 288V277h1V288zM657 288V276h1V288zM658 288V276h1V288zM659 288V276h1V288zM660 288V276h1V288zM661 288V276h1V288zM662 288V271h1V288zM663 288V276h1V288zM664 288V276h1V288zM665 288V276h1V288zM666 288V275h1V288zM667 288V275h1V288zM668 288V275h1V288zM669 288V276h1V288zM670 288V277h1V288zM671 288V275h1V288zM672 288V272h1V288zM673 288V274h1V288zM674 288V251h1V288zM675 288V271h1V288zM676 288V270h1V288zM677 288V270h1V288zM678 288V270h1V288zM679 288V268h1V288zM680 288V269h1V288zM681 288V268h1V288zM682 288V252h1V288zM683 288V267h1V288zM684 288V268h1V288zM685 288V268h1V288zM686 288V269h1V288zM687 288V269h1V288zM688 288V269h1V288zM689 288V268h1V288zM690 288V267h1V288zM691 288V267h1V288zM692 288V266h1V288zM693 288V263h1V288zM694 288V266h1V288zM695 288V266h1V288zM696 288V266h1V288zM697 288V268h1V288zM698 288V268h1V288zM699 288V269h1V288zM700 288V268h1V288zM701 288V220h1V288zM702 288V268h1V288zM703 288V190h1V288zM704 288V257h1V288zM705 288V268h1V288zM706 288V268h1V288zM707 288V268h1V288zM708 288V268h1V288zM709 288V268h1V288zM710 288V268h1V288zM711 288V267h1V288zM712 288V270h1V288zM713 288V270h1V288z" fill="#00c800"/><rect x="713" y="124" width="1" height="163" fill="#900090"/><path d="M190 233h1v1h-1zM191 233h1v1h-1zM192 233h1v1h-1zM193 233h1v1h-1zM194 233h1v1h-1zM194 232h1v2h-1zM195 232h1v1h-1zM196 232h1v1h-1zM197 232h1v1h-1zM198 232h1v1h-1zM198 231h1v2h-1zM199 231h1v1h-1zM200 231h1v1h-1zM201 231h1v1h-1zM202 231h1v1h-1zM202 230h1v2h-1zM203 230h1v1h-1zM204 230h1v1h-1zM205 230h1v1h-1zM206 230h1v1h-1zM207 230h1v1h-1zM207 229h1v2h-1zM208 229h1v1h-1zM209 229h1v1h-1zM210 229h1v1h-1zM211 229h1v1h-1zM211 228h1v2h-1zM212 228h1v1h-1zM213 228h1v1h-1zM214 228h1v1h-1zM215 228h1v1h-1zM216 228h1v1h-1zM216 227h1v2h-1zM217 227h1v1h-1zM218 227h1v1h-1zM219 227h1v1h-1zM220 227h1v1h-1zM221 227h1v1h-1zM221 226h1v2h-1zM222 226h1v1h-1zM223 226h1v1h-1zM224 226h1v1h-1zM225 226h1v1h-1zM225 225h1v2h-1zM226 225h1v1h-1zM227 225h1v1h-1zM228 225h1v1h-1zM229 225h1v1h-1zM230 225h1v1h-1zM230 224h1v2h-1zM231 224h1v1h-1zM232 224h1v1h-1zM233 224h1v1h-1zM234 224h1v1h-1zM235 224h1v1h-1zM235 223h1v2h-1zM236 223h1v1h-1zM237 223h1v1h-1zM238 223h1v1h-1zM239 223h1v1h-1zM240 223h1v1h-1zM240 222h1v2h-1zM241 222h1v1h-1zM242 222h1v1h-1zM243 222h1v1h-1zM244 222h1v1h-1zM245 222h1v1h-1zM245 221h1v2h-1zM246 221h1v1h-1zM247 221h1v1h-1zM248 221h1v1h-1zM249 221h1v1h-1zM250 221h1v1h-1zM250 220h1v2h-1zM251 220h1v1h-1zM252 220h1v1h-1zM253 220h1v1h-1zM254 220h1v1h-1zM255 220h1v1h-1zM256 220h1v1h-1zM256 219h1v2h-1zM257 219h1v1h-1zM258 219h1v1h-1zM259 219h1v1h-1zM260 219h1v1h-1zM261 219h1v1h-1zM261 218h1v2h-1zM262 218h1v1h-1zM263 218h1v1h-1zM264 218h1v1h-1zM265 218h1v1h-1zM266 218h1v1h-1zM266 217h1v2h-1zM267 217h1v1h-1zM268 217h1v1h-1zM269 217h1v1h-1zM270 217h1v1h-1zM271 217h1v1h-1zM272 217h1v1h-1zM272 216h1v2h-1zM273 216h1v1h-1zM274 216h1v1h-1zM275 216h1v1h-1zM276 216h1v1h-1zM277 216h1v1h-1zM278 216h1v1h-1zM278 215h1v2h-1zM279 215h1v1h-1zM280 215h1v1h-1zM281 215h1v1h-1zM282 215h1v1h-1zM283 215h1v1h-1zM283 214h1v2h-1zM284 214h1v1h-1zM285 214h1v1h-1zM286 214h1v1h-1zM287 214h1v1h-1zM288 214h1v1h-1zM289 214h1v1h-1zM289 213h1v2h-1zM290 213h1v1h-1zM291 213h1v1h-1zM292 213h1v1h-1zM293 213h1v1h-1zM294 213h1v1h-1zM295 213h1v1h-1zM295 212h1v2h-1zM296 212h1v1h-1zM297 212h1v1h-1zM298 212h1v1h-1zM299 212h1v1h-1zM300 212h1v1h-1zM301 212h1v1h-1zM301 211h1v2h-1zM302 211h1v1h-1zM303 211h1v1h-1zM304 211h1v1h-1zM305 211h1v1h-1zM306 211h1v1h-1zM307 211h1v1h-1zM307 210h1v2h-1zM308 210h1v1h-1zM309 210h1v1h-1zM310 210h1v1h-1zM311 210h1v1h-1zM312 210h1v1h-1zM313 210h1v1h-1zM313 209h1v2h-1zM314 209h1v1h-1zM315 209h1v1h-1zM316 209h1v1h-1zM317 209h1v1h-1zM318 209h1v1h-1zM319 209h1v1h-1zM319 208h1v2h-1zM320 208h1v1h-1zM321 208h1v1h-1zM322 208h1v1h-1zM323 208h1v1h-1zM324 208h1v1h-1zM325 208h1v1h-1zM325 207h1v2h-1zM326 207h1v1h-1zM327 207h1v1h-1zM328 207h1v1h-1zM329 207h1v1h-1zM330 207h1v1h-1zM331 207h1v1h-1zM332 207h1v1h-1zM332 206h1v2h-1zM333 206h1v1h-1zM334 206h1v1h-1zM335 206h1v1h-1zM336 206h1v1h-1zM337 206h1v1h-1zM338 206h1v1h-1zM338 205h1v2h-1zM339 205h1v1h-1zM340 205h1v1h-1zM341 205h1v1h-1zM342 205h1v1h-1zM343 205h1v1h-1zM344 205h1v1h-1zM345 205h1v1h-1zM345 204h1v2h-1zM346 204h1v1h-1zM347 204h1v1h-1zM348 204h1v1h-1zM349 204h1v1h-1zM350 204h1v1h-1zM351 204h1v1h-1zM351 203h1v2h-1zM352 203h1v1h-1zM353 203h1v1h-1zM354 203h1v1h-1zM355 203h1v1h-1zM356 203h1v1h-1zM357 203h1v1h-1zM358 203h1v1h-1zM358 202h1v2h-1zM359 202h1v1h-1zM360 202h1v1h-1zM361 202h1v1h-1zM362 202h1v1h-1zM363 202h1v1h-1zM364 202h1v1h-1zM365 202h1v1h-1zM365 201h1v2h-1zM366 201h1v1h-1zM367 201h1v1h-1zM368 201h1v1h-1zM369 201h1v1h-1zM370 201h1v1h-1zM371 201h1v1h-1zM372 201h1v1h-1zM372 200h1v2h-1zM373 200h1v1h-1zM374 200h1v1h-1zM375 200h1v1h-1zM376 200h1v1h-1zM377 200h1v1h-1zM378 200h1v1h-1zM379 200h1v1h-1zM379 199h1v2h-1zM380 199h1v1h-1zM381 199h1v1h-1zM382 199h1v1h-1zM383 199h1v1h-1zM384 199h1v1h-1zM385 199h1v1h-1zM386 199h1v1h-1zM386 198h1v2h-1zM387 198h1v1h-1zM388 198h1v1h-1zM389 198h1v1h-1zM390 198h1v1h-1zM391 198h1v1h-1zM392 198h1v1h-1zM393 198h1v1h-1zM393 197h1v2h-1zM394 197h1v1h-1zM395 197h1v1h-1zM396 197h1v1h-1zM397 197h1v1h-1zM398 197h1v1h-1zM399 197h1v1h-1zM400 197h1v1h-1zM400 196h1v2h-1zM401 196h1v1h-1zM402 196h1v1h-1zM403 196h1v1h-1zM404 196h1v1h-1zM405 196h1v1h-1zM406 196h1v1h-1zM407 196h1v1h-1zM407 195h1v2h-1zM408 195h1v1h-1zM409 195h1v1h-1zM410 195h1v1h-1zM411 195h1v1h-1zM412 195h1v1h-1zM413 195h1v1h-1zM414 195h1v1h-1zM415 195h1v1h-1zM415 194h1v2h-1zM416 194h1v1h-1zM417 194h1v1h-1zM418 194h1v1h-1zM419 194h1v1h-1zM420 194h1v1h-1zM421 194h1v1h-1zM422 194h1v1h-1zM422 193h1v2h-1zM423 193h1v1h-1zM424 193h1v1h-1zM425 193h1v1h-1zM426 193h1v1h-1zM427 193h1v1h-1zM428 193h1v1h-1zM429 193h1v1h-1zM430 193h1v1h-1zM430 192h1v2h-1zM431 192h1v1h-1zM432 192h1v1h-1zM433 192h1v1h-1zM434 192h1v1h-1zM435 192h1v1h-1zM436 192h1v1h-1zM437 192h1v1h-1zM437 191h1v2h-1zM438 191h1v1h-1zM439 191h1v1h-1zM440 191h1v1h-1zM441 191h1v1h-1zM442 191h1v1h-1zM443 191h1v1h-1zM444 191h1v1h-1zM445 191h1v1h-1zM445 190h1v2h-1zM446 190h1v1h-1zM447 190h1v1h-1zM448 190h1v1h-1zM449 190h1v1h-1zM450 190h1v1h-1zM451 190h1v1h-1zM452 190h1v1h-1zM453 190h1v1h-1zM453 189h1v2h-1zM454 189h1v1h-1zM455 189h1v1h-1zM456 189h1v1h-1zM457 189h1v1h-1zM458 189h1v1h-1zM459 189h1v1h-1zM460 189h1v1h-1zM461 189h1v1h-1zM461 188h1v2h-1zM462 188h1v1h-1zM463 188h1v1h-1zM464 188h1v1h-1zM465 188h1v1h-1zM466 188h1v1h-1zM467 188h1v1h-1zM468 188h1v1h-1zM469 188h1v1h-1zM469 187h1v2h-1zM470 187h1v1h-1zM471 187h1v1h-1zM472 187h1v1h-1zM473 187h1v1h-1zM474 187h1v1h-1zM475 187h1v1h-1zM476 187h1v1h-1zM477 187h1v1h-1zM477 186h1v2h-1zM478 186h1v1h-1zM479 186h1v1h-1zM480 186h1v1h-1zM481 186h1v1h-1zM482 186h1v1h-1zM483 186h1v1h-1zM484 186h1v1h-1zM485 186h1v1h-1zM485 185h1v2h-1zM486 185h1v1h-1zM487 185h1v1h-1zM488 185h1v1h-1zM489 185h1v1h-1zM490 185h1v1h-1zM491 185h1v1h-1zM492 185h1v1h-1zM493 185h1v1h-1zM493 184h1v2h-1zM494 184h1v1h-1zM495 184h1v1h-1zM496 184h1v1h-1zM497 184h1v1h-1zM498 184h1v1h-1zM499 184h1v1h-1zM500 184h1v1h-1zM501 184h1v1h-1zM501 183h1v2h-1zM502 183h1v1h-1zM503 183h1v1h-1zM504 183h1v1h-1zM505 183h1v1h-1zM506 183h1v1h-1zM507 183h1v1h-1zM508 183h1v1h-1zM509 183h1v1h-1zM510 183h1v1h-1zM510 182h1v2h-1zM511 182h1v1h-1zM512 182h1v1h-1zM513 182h1v1h-1zM514 182h1v1h-1zM515 182h1v1h-1zM516 182h1v1h-1zM517 182h1v1h-1zM518 182h1v1h-1zM518 181h1v2h-1zM519 181h1v1h-1zM520 181h1v1h-1zM521 181h1v1h-1zM522 181h1v1h-1zM523 181h1v1h-1zM524 181h1v1h-1zM525 181h1v1h-1zM526 181h1v1h-1zM527 181h1v1h-1zM527 180h1v2h-1zM528 180h1v1h-1zM529 180h1v1h-1zM530 180h1v1h-1zM531 180h1v1h-1zM532 180h1v1h-1zM533 180h1v1h-1zM534 180h1v1h-1zM535 180h1v1h-1zM536 180h1v1h-1zM536 179h1v2h-1zM537 179h1v1h-1zM538 179h1v1h-1zM539 179h1v1h-1zM540 179h1v1h-1zM541 179h1v1h-1zM542 179h1v1h-1zM543 179h1v1h-1zM544 179h1v1h-1zM545 179h1v1h-1zM545 178h1v2h-1zM546 178h1v1h-1zM547 178h1v1h-1zM548 178h1v1h-1zM549 178h1v1h-1zM550 178h1v1h-1zM551 178h1v1h-1zM552 178h1v1h-1zM553 178h1v1h-1zM553 177h1v2h-1zM554 177h1v1h-1zM555 177h1v1h-1zM556 177h1v1h-1zM557 177h1v1h-1zM558 177h1v1h-1zM559 177h1v1h-1zM560 177h1v1h-1zM561 177h1v1h-1zM562 177h1v1h-1zM562 176h1v2h-1zM563 176h1v1h-1zM564 176h1v1h-1zM565 176h1v1h-1zM566 176h1v1h-1zM567 176h1v1h-1zM568 176h1v1h-1zM569 176h1v1h-1zM570 176h1v1h-1zM571 176h1v1h-1zM572 176h1v1h-1zM572 175h1v2h-1zM573 175h1v1h-1zM574 175h1v1h-1zM575 175h1v1h-1zM576 175h1v1h-1zM577 175h1v1h-1zM578 175h1v1h-1zM579 175h1v1h-1zM580 175h1v1h-1zM581 175h1v1h-1zM581 174h1v2h-1zM582 174h1v1h-1zM583 174h1v1h-1zM584 174h1v1h-1zM585 174h1v1h-1zM586 174h1v1h-1zM587 174h1v1h-1zM588 174h1v1h-1zM589 174h1v1h-1zM590 174h1v1h-1zM590 173h1v2h-1zM591 173h1v1h-1zM592 173h1v1h-1zM593 173h1v1h-1zM594 173h1v1h-1zM595 173h1v1h-1zM596 173h1v1h-1zM597 173h1v1h-1zM598 173h1v1h-1zM599 173h1v1h-1zM599 172h1v2h-1zM600 172h1v1h-1zM601 172h1v1h-1zM602 172h1v1h-1zM603 172h1v1h-1zM604 172h1v1h-1zM605 172h1v1h-1zM606 172h1v1h-1zM607 172h1v1h-1zM608 172h1v1h-1zM609 172h1v1h-1zM609 171h1v2h-1zM610 171h1v1h-1zM611 171h1v1h-1zM612 171h1v1h-1zM613 171h1v1h-1zM614 171h1v1h-1zM615 171h1v1h-1zM616 171h1v1h-1zM617 171h1v1h-1zM618 171h1v1h-1zM618 170h1v2h-1zM619 170h1v1h-1zM620 170h1v1h-1zM621 170h1v1h-1zM622 170h1v1h-1zM623 170h1v1h-1zM624 170h1v1h-1zM625 170h1v1h-1zM626 170h1v1h-1zM627 170h1v1h-1zM628 170h1v1h-1zM628 169h1v2h-1zM629 169h1v1h-1zM630 169h1v1h-1zM631 169h1v1h-1zM632 169h1v1h-1zM633 169h1v1h-1zM634 169h1v1h-1zM635 169h1v1h-1zM636 169h1v1h-1zM637 169h1v1h-1zM638 169h1v1h-1zM638 168h1v2h-1zM639 168h1v1h-1zM640 168h1v1h-1zM641 168h1v1h-1zM642 168h1v1h-1zM643 168h1v1h-1zM644 168h1v1h-1zM645 168h1v1h-1zM646 168h1v1h-1zM647 168h1v1h-1zM648 168h1v1h-1zM648 167h1v2h-1zM649 167h1v1h-1zM650 167h1v1h-1zM651 167h1v1h-1zM652 167h1v1h-1zM653 167h1v1h-1zM654 167h1v1h-1zM655 167h1v1h-1zM656 167h1v1h-1zM657 167h1v1h-1zM657 166h1v2h-1zM658 166h1v1h-1zM659 166h1v1h-1zM660 166h1v1h-1zM661 166h1v1h-1zM662 166h1v1h-1zM663 166h1v1h-1zM664 166h1v1h-1zM665 166h1v1h-1zM666 166h1v1h-1zM667 166h1v1h-1zM667 165h1v2h-1zM668 165h1v1h-1zM669 165h1v1h-1zM670 165h1v1h-1zM671 165h1v1h-1zM672 165h1v1h-1zM673 165h1v1h-1zM674 165h1v1h-1zM675 165h1v1h-1zM676 165h1v1h-1zM677 165h1v1h-1zM678 165h1v1h-1zM678 164h1v2h-1zM679 164h1v1h-1zM680 164h1v1h-1zM681 164h1v1h-1zM682 164h1v1h-1zM683 164h1v1h-1zM684 164h1v1h-1zM685 164h1v1h-1zM686 164h1v1h-1zM687 164h1v1h-1zM688 164h1v1h-1zM688 163h1v2h-1zM689 163h1v1h-1zM690 163h1v1h-1zM691 163h1v1h-1zM692 163h1v1h-1zM693 163h1v1h-1zM694 163h1v1h-1zM695 163h1v1h-1zM696 163h1v1h-1zM697 163h1v1h-1zM698 163h1v1h-1zM698 162h1v2h-1zM699 162h1v1h-1zM700 162h1v1h-1zM701 162h1v1h-1zM702 162h1v1h-1zM703 162h1v1h-1zM704 162h1v1h-1zM705 162h1v1h-1zM706 162h1v1h-1zM707 162h1v1h-1zM708 162h1v1h-1zM709 162h1v1h-1zM709 161h1v2h-1zM710 161h1v1h-1zM711 161h1v1h-1zM712 161h1v1h-1z" fill="#00ffff"/><rect x="189" y="123" width="583" height="1" fill="#000"/><rect x="189" y="123" width="1" height="165" fill="#000"/><rect x="771" y="123" width="1" height="166" fill="#000"/></svg>
<svg class="b" style="left:189px;top:317px" width="583" height="166" viewBox="189 317 583 166" shape-rendering="crispEdges"><defs><linearGradient id="bg2" x1="0" y1="0" x2="0" y2="1"><stop offset="0" stop-color="#000040"/><stop offset="1" stop-color="#000084"/></linearGradient></defs><rect x="189" y="317" width="583" height="165" fill="url(#bg2)"/><rect x="190" y="318" width="1" height="164" fill="#1f1f1f"/><rect x="201" y="318" width="1" height="164" fill="#1f1f1f"/><rect x="213" y="318" width="1" height="164" fill="#1f1f1f"/><rect x="224" y="318" width="1" height="164" fill="#1f1f1f"/><rect x="236" y="318" width="1" height="164" fill="#1f1f1f"/><rect x="248" y="318" width="1" height="164" fill="#1f1f1f"/><rect x="259" y="318" width="1" height="164" fill="#1f1f1f"/><rect x="271" y="318" width="1" height="164" fill="#1f1f1f"/><rect x="282" y="318" width="1" height="164" fill="#1f1f1f"/><rect x="294" y="318" width="1" height="164" fill="#1f1f1f"/><rect x="306" y="318" width="1" height="164" fill="#1f1f1f"/><rect x="317" y="318" width="1" height="164" fill="#1f1f1f"/><rect x="329" y="318" width="1" height="164" fill="#1f1f1f"/><rect x="340" y="318" width="1" height="164" fill="#1f1f1f"/><rect x="352" y="318" width="1" height="164" fill="#1f1f1f"/><rect x="364" y="318" width="1" height="164" fill="#1f1f1f"/><rect x="375" y="318" width="1" height="164" fill="#1f1f1f"/><rect x="387" y="318" width="1" height="164" fill="#1f1f1f"/><rect x="398" y="318" width="1" height="164" fill="#1f1f1f"/><rect x="410" y="318" width="1" height="164" fill="#1f1f1f"/><rect x="422" y="318" width="1" height="164" fill="#1f1f1f"/><rect x="433" y="318" width="1" height="164" fill="#1f1f1f"/><rect x="445" y="318" width="1" height="164" fill="#1f1f1f"/><rect x="456" y="318" width="1" height="164" fill="#1f1f1f"/><rect x="468" y="318" width="1" height="164" fill="#1f1f1f"/><rect x="480" y="318" width="1" height="164" fill="#1f1f1f"/><rect x="491" y="318" width="1" height="164" fill="#1f1f1f"/><rect x="503" y="318" width="1" height="164" fill="#1f1f1f"/><rect x="514" y="318" width="1" height="164" fill="#1f1f1f"/><rect x="526" y="318" width="1" height="164" fill="#1f1f1f"/><rect x="538" y="318" width="1" height="164" fill="#1f1f1f"/><rect x="549" y="318" width="1" height="164" fill="#1f1f1f"/><rect x="561" y="318" width="1" height="164" fill="#1f1f1f"/><rect x="572" y="318" width="1" height="164" fill="#1f1f1f"/><rect x="584" y="318" width="1" height="164" fill="#1f1f1f"/><rect x="596" y="318" width="1" height="164" fill="#1f1f1f"/><rect x="607" y="318" width="1" height="164" fill="#1f1f1f"/><rect x="619" y="318" width="1" height="164" fill="#1f1f1f"/><rect x="630" y="318" width="1" height="164" fill="#1f1f1f"/><rect x="642" y="318" width="1" height="164" fill="#1f1f1f"/><rect x="654" y="318" width="1" height="164" fill="#1f1f1f"/><rect x="665" y="318" width="1" height="164" fill="#1f1f1f"/><rect x="677" y="318" width="1" height="164" fill="#1f1f1f"/><rect x="688" y="318" width="1" height="164" fill="#1f1f1f"/><rect x="700" y="318" width="1" height="164" fill="#1f1f1f"/><rect x="712" y="318" width="1" height="164" fill="#1f1f1f"/><rect x="723" y="318" width="1" height="164" fill="#1f1f1f"/><rect x="735" y="318" width="1" height="164" fill="#1f1f1f"/><rect x="746" y="318" width="1" height="164" fill="#1f1f1f"/><rect x="758" y="318" width="1" height="164" fill="#1f1f1f"/><rect x="770" y="318" width="1" height="164" fill="#1f1f1f"/><rect x="190" y="318" width="581" height="1" fill="#2a2a24"/><rect x="190" y="359" width="581" height="1" fill="#2a2a24"/><rect x="190" y="400" width="581" height="1" fill="#2a2a24"/><rect x="190" y="441" width="581" height="1" fill="#2a2a24"/><rect x="189" y="481" width="583" height="1" fill="#000"/><rect x="190" y="449" width="1" height="33" fill="rgb(42,200,0)"/><rect x="191" y="465" width="1" height="17" fill="rgb(22,200,0)"/><rect x="192" y="457" width="1" height="25" fill="rgb(21,200,0)"/><rect x="193" y="465" width="1" height="17" fill="rgb(22,200,0)"/><rect x="194" y="473" width="1" height="9" fill="rgb(7,200,0)"/><rect x="195" y="465" width="1" height="17" fill="rgb(14,200,0)"/><rect x="196" y="465" width="1" height="17" fill="rgb(14,200,0)"/><rect x="197" y="465" width="1" height="17" fill="rgb(14,200,0)"/><rect x="198" y="473" width="1" height="9" fill="rgb(7,200,0)"/><rect x="199" y="465" width="1" height="17" fill="rgb(8,200,0)"/><rect x="200" y="473" width="1" height="9" fill="rgb(7,200,0)"/><rect x="201" y="465" width="1" height="17" fill="rgb(14,200,0)"/><rect x="202" y="465" width="1" height="17" fill="rgb(8,200,0)"/><rect x="203" y="473" width="1" height="9" fill="rgb(21,200,0)"/><rect x="204" y="473" width="1" height="9" fill="rgb(1,200,0)"/><rect x="205" y="465" width="1" height="17" fill="rgb(8,200,0)"/><rect x="206" y="465" width="1" height="17" fill="rgb(14,200,0)"/><rect x="207" y="465" width="1" height="17" fill="rgb(28,200,0)"/><rect x="208" y="465" width="1" height="17" fill="rgb(22,200,0)"/><rect x="209" y="473" width="1" height="9" fill="rgb(1,200,0)"/><rect x="210" y="473" width="1" height="9" fill="rgb(1,200,0)"/><rect x="211" y="473" width="1" height="9" fill="rgb(7,200,0)"/><rect x="212" y="473" width="1" height="9" fill="rgb(7,200,0)"/><rect x="213" y="465" width="1" height="17" fill="rgb(8,200,0)"/><rect x="214" y="465" width="1" height="17" fill="rgb(14,200,0)"/><rect x="215" y="465" width="1" height="17" fill="rgb(14,200,0)"/><rect x="216" y="473" width="1" height="9" fill="rgb(21,200,0)"/><rect x="217" y="465" width="1" height="17" fill="rgb(28,200,0)"/><rect x="218" y="465" width="1" height="17" fill="rgb(22,200,0)"/><rect x="219" y="457" width="1" height="25" fill="rgb(15,200,0)"/><rect x="220" y="457" width="1" height="25" fill="rgb(29,200,0)"/><rect x="221" y="457" width="1" height="25" fill="rgb(21,200,0)"/><rect x="222" y="465" width="1" height="17" fill="rgb(14,200,0)"/><rect x="223" y="465" width="1" height="17" fill="rgb(14,200,0)"/><rect x="224" y="465" width="1" height="17" fill="rgb(22,200,0)"/><rect x="225" y="457" width="1" height="25" fill="rgb(15,200,0)"/><rect x="226" y="457" width="1" height="25" fill="rgb(21,200,0)"/><rect x="227" y="457" width="1" height="25" fill="rgb(29,200,0)"/><rect x="228" y="457" width="1" height="25" fill="rgb(29,200,0)"/><rect x="229" y="457" width="1" height="25" fill="rgb(21,200,0)"/><rect x="230" y="457" width="1" height="25" fill="rgb(29,200,0)"/><rect x="231" y="457" width="1" height="25" fill="rgb(21,200,0)"/><rect x="232" y="457" width="1" height="25" fill="rgb(21,200,0)"/><rect x="233" y="457" width="1" height="25" fill="rgb(15,200,0)"/><rect x="234" y="449" width="1" height="33" fill="rgb(36,200,0)"/><rect x="235" y="457" width="1" height="25" fill="rgb(21,200,0)"/><rect x="236" y="465" width="1" height="17" fill="rgb(8,200,0)"/><rect x="237" y="465" width="1" height="17" fill="rgb(14,200,0)"/><rect x="238" y="457" width="1" height="25" fill="rgb(21,200,0)"/><rect x="239" y="457" width="1" height="25" fill="rgb(15,200,0)"/><rect x="240" y="457" width="1" height="25" fill="rgb(35,200,0)"/><rect x="241" y="465" width="1" height="17" fill="rgb(14,200,0)"/><rect x="242" y="457" width="1" height="25" fill="rgb(21,200,0)"/><rect x="243" y="457" width="1" height="25" fill="rgb(29,200,0)"/><rect x="244" y="457" width="1" height="25" fill="rgb(15,200,0)"/><rect x="245" y="457" width="1" height="25" fill="rgb(29,200,0)"/><rect x="246" y="457" width="1" height="25" fill="rgb(15,200,0)"/><rect x="247" y="457" width="1" height="25" fill="rgb(15,200,0)"/><rect x="248" y="457" width="1" height="25" fill="rgb(29,200,0)"/><rect x="249" y="457" width="1" height="25" fill="rgb(21,200,0)"/><rect x="250" y="457" width="1" height="25" fill="rgb(21,200,0)"/><rect x="251" y="457" width="1" height="25" fill="rgb(21,200,0)"/><rect x="252" y="457" width="1" height="25" fill="rgb(29,200,0)"/><rect x="253" y="457" width="1" height="25" fill="rgb(15,200,0)"/><rect x="254" y="457" width="1" height="25" fill="rgb(21,200,0)"/><rect x="255" y="457" width="1" height="25" fill="rgb(21,200,0)"/><rect x="256" y="457" width="1" height="25" fill="rgb(21,200,0)"/><rect x="257" y="457" width="1" height="25" fill="rgb(21,200,0)"/><rect x="258" y="457" width="1" height="25" fill="rgb(15,200,0)"/><rect x="259" y="457" width="1" height="25" fill="rgb(21,200,0)"/><rect x="260" y="465" width="1" height="17" fill="rgb(22,200,0)"/><rect x="261" y="465" width="1" height="17" fill="rgb(28,200,0)"/><rect x="262" y="465" width="1" height="17" fill="rgb(14,200,0)"/><rect x="263" y="449" width="1" height="33" fill="rgb(36,200,0)"/><rect x="264" y="465" width="1" height="17" fill="rgb(14,200,0)"/><rect x="265" y="465" width="1" height="17" fill="rgb(14,200,0)"/><rect x="266" y="465" width="1" height="17" fill="rgb(22,200,0)"/><rect x="267" y="457" width="1" height="25" fill="rgb(29,200,0)"/><rect x="268" y="457" width="1" height="25" fill="rgb(21,200,0)"/><rect x="269" y="457" width="1" height="25" fill="rgb(21,200,0)"/><rect x="270" y="457" width="1" height="25" fill="rgb(15,200,0)"/><rect x="271" y="465" width="1" height="17" fill="rgb(14,200,0)"/><rect x="272" y="457" width="1" height="25" fill="rgb(35,200,0)"/><rect x="273" y="457" width="1" height="25" fill="rgb(21,200,0)"/><rect x="274" y="457" width="1" height="25" fill="rgb(21,200,0)"/><rect x="275" y="457" width="1" height="25" fill="rgb(21,200,0)"/><rect x="276" y="465" width="1" height="17" fill="rgb(14,200,0)"/><rect x="277" y="465" width="1" height="17" fill="rgb(22,200,0)"/><rect x="278" y="465" width="1" height="17" fill="rgb(8,200,0)"/><rect x="279" y="465" width="1" height="17" fill="rgb(14,200,0)"/><rect x="280" y="457" width="1" height="25" fill="rgb(29,200,0)"/><rect x="281" y="457" width="1" height="25" fill="rgb(29,200,0)"/><rect x="282" y="457" width="1" height="25" fill="rgb(15,200,0)"/><rect x="283" y="457" width="1" height="25" fill="rgb(21,200,0)"/><rect x="284" y="465" width="1" height="17" fill="rgb(28,200,0)"/><rect x="285" y="465" width="1" height="17" fill="rgb(8,200,0)"/><rect x="286" y="457" width="1" height="25" fill="rgb(21,200,0)"/><rect x="287" y="449" width="1" height="33" fill="rgb(42,200,0)"/><rect x="288" y="457" width="1" height="25" fill="rgb(29,200,0)"/><rect x="289" y="457" width="1" height="25" fill="rgb(21,200,0)"/><rect x="290" y="457" width="1" height="25" fill="rgb(15,200,0)"/><rect x="291" y="457" width="1" height="25" fill="rgb(21,200,0)"/><rect x="292" y="457" width="1" height="25" fill="rgb(21,200,0)"/><rect x="293" y="457" width="1" height="25" fill="rgb(21,200,0)"/><rect x="294" y="457" width="1" height="25" fill="rgb(29,200,0)"/><rect x="295" y="457" width="1" height="25" fill="rgb(21,200,0)"/><rect x="296" y="457" width="1" height="25" fill="rgb(21,200,0)"/><rect x="297" y="441" width="1" height="41" fill="rgb(35,200,0)"/><rect x="298" y="457" width="1" height="25" fill="rgb(15,200,0)"/><rect x="299" y="457" width="1" height="25" fill="rgb(29,200,0)"/><rect x="300" y="457" width="1" height="25" fill="rgb(21,200,0)"/><rect x="301" y="457" width="1" height="25" fill="rgb(29,200,0)"/><rect x="302" y="465" width="1" height="17" fill="rgb(14,200,0)"/><rect x="303" y="465" width="1" height="17" fill="rgb(8,200,0)"/><rect x="304" y="465" width="1" height="17" fill="rgb(14,200,0)"/><rect x="305" y="457" width="1" height="25" fill="rgb(21,200,0)"/><rect x="306" y="449" width="1" height="33" fill="rgb(22,200,0)"/><rect x="307" y="465" width="1" height="17" fill="rgb(22,200,0)"/><rect x="308" y="457" width="1" height="25" fill="rgb(35,200,0)"/><rect x="309" y="457" width="1" height="25" fill="rgb(21,200,0)"/><rect x="310" y="457" width="1" height="25" fill="rgb(35,200,0)"/><rect x="311" y="457" width="1" height="25" fill="rgb(21,200,0)"/><rect x="312" y="457" width="1" height="25" fill="rgb(29,200,0)"/><rect x="313" y="457" width="1" height="25" fill="rgb(15,200,0)"/><rect x="314" y="449" width="1" height="33" fill="rgb(42,200,0)"/><rect x="315" y="465" width="1" height="17" fill="rgb(14,200,0)"/><rect x="316" y="457" width="1" height="25" fill="rgb(21,200,0)"/><rect x="317" y="457" width="1" height="25" fill="rgb(21,200,0)"/><rect x="318" y="457" width="1" height="25" fill="rgb(29,200,0)"/><rect x="319" y="457" width="1" height="25" fill="rgb(15,200,0)"/><rect x="320" y="457" width="1" height="25" fill="rgb(29,200,0)"/><rect x="321" y="465" width="1" height="17" fill="rgb(14,200,0)"/><rect x="322" y="457" width="1" height="25" fill="rgb(21,200,0)"/><rect x="323" y="457" width="1" height="25" fill="rgb(35,200,0)"/><rect x="324" y="449" width="1" height="33" fill="rgb(28,200,0)"/><rect x="325" y="449" width="1" height="33" fill="rgb(28,200,0)"/><rect x="326" y="457" width="1" height="25" fill="rgb(21,200,0)"/><rect x="327" y="449" width="1" height="33" fill="rgb(42,200,0)"/><rect x="328" y="457" width="1" height="25" fill="rgb(21,200,0)"/><rect x="329" y="457" width="1" height="25" fill="rgb(21,200,0)"/><rect x="330" y="457" width="1" height="25" fill="rgb(21,200,0)"/><rect x="331" y="449" width="1" height="33" fill="rgb(42,200,0)"/><rect x="332" y="449" width="1" height="33" fill="rgb(22,200,0)"/><rect x="333" y="465" width="1" height="17" fill="rgb(8,200,0)"/><rect x="334" y="457" width="1" height="25" fill="rgb(35,200,0)"/><rect x="335" y="457" width="1" height="25" fill="rgb(29,200,0)"/><rect x="336" y="465" width="1" height="17" fill="rgb(14,200,0)"/><rect x="337" y="457" width="1" height="25" fill="rgb(21,200,0)"/><rect x="338" y="465" width="1" height="17" fill="rgb(14,200,0)"/><rect x="339" y="457" width="1" height="25" fill="rgb(21,200,0)"/><rect x="340" y="457" width="1" height="25" fill="rgb(35,200,0)"/><rect x="341" y="441" width="1" height="41" fill="rgb(35,200,0)"/><rect x="342" y="449" width="1" height="33" fill="rgb(42,200,0)"/><rect x="343" y="457" width="1" height="25" fill="rgb(21,200,0)"/><rect x="344" y="457" width="1" height="25" fill="rgb(21,200,0)"/><rect x="345" y="457" width="1" height="25" fill="rgb(15,200,0)"/><rect x="346" y="457" width="1" height="25" fill="rgb(15,200,0)"/><rect x="347" y="465" width="1" height="17" fill="rgb(28,200,0)"/><rect x="348" y="449" width="1" height="33" fill="rgb(36,200,0)"/><rect x="349" y="457" width="1" height="25" fill="rgb(15,200,0)"/><rect x="350" y="465" width="1" height="17" fill="rgb(28,200,0)"/><rect x="351" y="465" width="1" height="17" fill="rgb(14,200,0)"/><rect x="352" y="465" width="1" height="17" fill="rgb(14,200,0)"/><rect x="353" y="465" width="1" height="17" fill="rgb(14,200,0)"/><rect x="354" y="449" width="1" height="33" fill="rgb(36,200,0)"/><rect x="355" y="449" width="1" height="33" fill="rgb(22,200,0)"/><rect x="356" y="465" width="1" height="17" fill="rgb(8,200,0)"/><rect x="357" y="449" width="1" height="33" fill="rgb(36,200,0)"/><rect x="358" y="457" width="1" height="25" fill="rgb(29,200,0)"/><rect x="359" y="457" width="1" height="25" fill="rgb(21,200,0)"/><rect x="360" y="457" width="1" height="25" fill="rgb(21,200,0)"/><rect x="361" y="465" width="1" height="17" fill="rgb(14,200,0)"/><rect x="362" y="457" width="1" height="25" fill="rgb(21,200,0)"/><rect x="363" y="457" width="1" height="25" fill="rgb(35,200,0)"/><rect x="364" y="457" width="1" height="25" fill="rgb(21,200,0)"/><rect x="365" y="441" width="1" height="41" fill="rgb(29,200,0)"/><rect x="366" y="433" width="1" height="49" fill="rgb(42,200,0)"/><rect x="367" y="449" width="1" height="33" fill="rgb(28,200,0)"/><rect x="368" y="465" width="1" height="17" fill="rgb(28,200,0)"/><rect x="369" y="457" width="1" height="25" fill="rgb(35,200,0)"/><rect x="370" y="457" width="1" height="25" fill="rgb(15,200,0)"/><rect x="371" y="457" width="1" height="25" fill="rgb(21,200,0)"/><rect x="372" y="457" width="1" height="25" fill="rgb(35,200,0)"/><rect x="373" y="457" width="1" height="25" fill="rgb(29,200,0)"/><rect x="374" y="457" width="1" height="25" fill="rgb(35,200,0)"/><rect x="375" y="457" width="1" height="25" fill="rgb(15,200,0)"/><rect x="376" y="465" width="1" height="17" fill="rgb(8,200,0)"/><rect x="377" y="457" width="1" height="25" fill="rgb(21,200,0)"/><rect x="378" y="457" width="1" height="25" fill="rgb(21,200,0)"/><rect x="379" y="465" width="1" height="17" fill="rgb(14,200,0)"/><rect x="380" y="457" width="1" height="25" fill="rgb(29,200,0)"/><rect x="381" y="457" width="1" height="25" fill="rgb(35,200,0)"/><rect x="382" y="457" width="1" height="25" fill="rgb(15,200,0)"/><rect x="383" y="457" width="1" height="25" fill="rgb(21,200,0)"/><rect x="384" y="457" width="1" height="25" fill="rgb(15,200,0)"/><rect x="385" y="457" width="1" height="25" fill="rgb(29,200,0)"/><rect x="386" y="457" width="1" height="25" fill="rgb(29,200,0)"/><rect x="387" y="457" width="1" height="25" fill="rgb(35,200,0)"/><rect x="388" y="457" width="1" height="25" fill="rgb(15,200,0)"/><rect x="389" y="457" width="1" height="25" fill="rgb(35,200,0)"/><rect x="390" y="465" width="1" height="17" fill="rgb(28,200,0)"/><rect x="391" y="465" width="1" height="17" fill="rgb(14,200,0)"/><rect x="392" y="457" width="1" height="25" fill="rgb(15,200,0)"/><rect x="393" y="457" width="1" height="25" fill="rgb(21,200,0)"/><rect x="394" y="465" width="1" height="17" fill="rgb(8,200,0)"/><rect x="395" y="457" width="1" height="25" fill="rgb(21,200,0)"/><rect x="396" y="457" width="1" height="25" fill="rgb(35,200,0)"/><rect x="397" y="457" width="1" height="25" fill="rgb(21,200,0)"/><rect x="398" y="457" width="1" height="25" fill="rgb(21,200,0)"/><rect x="399" y="457" width="1" height="25" fill="rgb(15,200,0)"/><rect x="400" y="457" width="1" height="25" fill="rgb(21,200,0)"/><rect x="401" y="457" width="1" height="25" fill="rgb(21,200,0)"/><rect x="402" y="457" width="1" height="25" fill="rgb(35,200,0)"/><rect x="403" y="457" width="1" height="25" fill="rgb(15,200,0)"/><rect x="404" y="457" width="1" height="25" fill="rgb(15,200,0)"/><rect x="405" y="457" width="1" height="25" fill="rgb(15,200,0)"/><rect x="406" y="465" width="1" height="17" fill="rgb(14,200,0)"/><rect x="407" y="457" width="1" height="25" fill="rgb(21,200,0)"/><rect x="408" y="457" width="1" height="25" fill="rgb(15,200,0)"/><rect x="409" y="457" width="1" height="25" fill="rgb(35,200,0)"/><rect x="410" y="457" width="1" height="25" fill="rgb(35,200,0)"/><rect x="411" y="457" width="1" height="25" fill="rgb(29,200,0)"/><rect x="412" y="449" width="1" height="33" fill="rgb(42,200,0)"/><rect x="413" y="457" width="1" height="25" fill="rgb(21,200,0)"/><rect x="414" y="465" width="1" height="17" fill="rgb(22,200,0)"/><rect x="415" y="457" width="1" height="25" fill="rgb(15,200,0)"/><rect x="416" y="457" width="1" height="25" fill="rgb(21,200,0)"/><rect x="417" y="457" width="1" height="25" fill="rgb(15,200,0)"/><rect x="418" y="465" width="1" height="17" fill="rgb(14,200,0)"/><rect x="419" y="457" width="1" height="25" fill="rgb(15,200,0)"/><rect x="420" y="457" width="1" height="25" fill="rgb(21,200,0)"/><rect x="421" y="457" width="1" height="25" fill="rgb(15,200,0)"/><rect x="422" y="457" width="1" height="25" fill="rgb(29,200,0)"/><rect x="423" y="457" width="1" height="25" fill="rgb(29,200,0)"/><rect x="424" y="465" width="1" height="17" fill="rgb(28,200,0)"/><rect x="425" y="457" width="1" height="25" fill="rgb(35,200,0)"/><rect x="426" y="457" width="1" height="25" fill="rgb(21,200,0)"/><rect x="427" y="457" width="1" height="25" fill="rgb(15,200,0)"/><rect x="428" y="449" width="1" height="33" fill="rgb(22,200,0)"/><rect x="429" y="457" width="1" height="25" fill="rgb(15,200,0)"/><rect x="430" y="457" width="1" height="25" fill="rgb(29,200,0)"/><rect x="431" y="457" width="1" height="25" fill="rgb(21,200,0)"/><rect x="432" y="457" width="1" height="25" fill="rgb(35,200,0)"/><rect x="433" y="457" width="1" height="25" fill="rgb(35,200,0)"/><rect x="434" y="457" width="1" height="25" fill="rgb(21,200,0)"/><rect x="435" y="457" width="1" height="25" fill="rgb(21,200,0)"/><rect x="436" y="457" width="1" height="25" fill="rgb(21,200,0)"/><rect x="437" y="457" width="1" height="25" fill="rgb(35,200,0)"/><rect x="438" y="449" width="1" height="33" fill="rgb(36,200,0)"/><rect x="439" y="457" width="1" height="25" fill="rgb(29,200,0)"/><rect x="440" y="457" width="1" height="25" fill="rgb(21,200,0)"/><rect x="441" y="457" width="1" height="25" fill="rgb(15,200,0)"/><rect x="442" y="457" width="1" height="25" fill="rgb(29,200,0)"/><rect x="443" y="457" width="1" height="25" fill="rgb(29,200,0)"/><rect x="444" y="457" width="1" height="25" fill="rgb(35,200,0)"/><rect x="445" y="457" width="1" height="25" fill="rgb(35,200,0)"/><rect x="446" y="449" width="1" height="33" fill="rgb(42,200,0)"/><rect x="447" y="457" width="1" height="25" fill="rgb(15,200,0)"/><rect x="448" y="457" width="1" height="25" fill="rgb(29,200,0)"/><rect x="449" y="457" width="1" height="25" fill="rgb(15,200,0)"/><rect x="450" y="457" width="1" height="25" fill="rgb(21,200,0)"/><rect x="451" y="457" width="1" height="25" fill="rgb(21,200,0)"/><rect x="452" y="457" width="1" height="25" fill="rgb(29,200,0)"/><rect x="453" y="457" width="1" height="25" fill="rgb(21,200,0)"/><rect x="454" y="457" width="1" height="25" fill="rgb(21,200,0)"/><rect x="455" y="465" width="1" height="17" fill="rgb(22,200,0)"/><rect x="456" y="449" width="1" height="33" fill="rgb(42,200,0)"/><rect x="457" y="465" width="1" height="17" fill="rgb(14,200,0)"/><rect x="458" y="449" width="1" height="33" fill="rgb(36,200,0)"/><rect x="459" y="457" width="1" height="25" fill="rgb(35,200,0)"/><rect x="460" y="457" width="1" height="25" fill="rgb(15,200,0)"/><rect x="461" y="457" width="1" height="25" fill="rgb(21,200,0)"/><rect x="462" y="457" width="1" height="25" fill="rgb(35,200,0)"/><rect x="463" y="457" width="1" height="25" fill="rgb(21,200,0)"/><rect x="464" y="457" width="1" height="25" fill="rgb(21,200,0)"/><rect x="465" y="465" width="1" height="17" fill="rgb(14,200,0)"/><rect x="466" y="465" width="1" height="17" fill="rgb(22,200,0)"/><rect x="467" y="465" width="1" height="17" fill="rgb(8,200,0)"/><rect x="468" y="465" width="1" height="17" fill="rgb(14,200,0)"/><rect x="469" y="457" width="1" height="25" fill="rgb(15,200,0)"/><rect x="470" y="457" width="1" height="25" fill="rgb(35,200,0)"/><rect x="471" y="457" width="1" height="25" fill="rgb(21,200,0)"/><rect x="472" y="457" width="1" height="25" fill="rgb(15,200,0)"/><rect x="473" y="457" width="1" height="25" fill="rgb(21,200,0)"/><rect x="474" y="457" width="1" height="25" fill="rgb(29,200,0)"/><rect x="475" y="457" width="1" height="25" fill="rgb(21,200,0)"/><rect x="476" y="465" width="1" height="17" fill="rgb(28,200,0)"/><rect x="477" y="457" width="1" height="25" fill="rgb(15,200,0)"/><rect x="478" y="457" width="1" height="25" fill="rgb(21,200,0)"/><rect x="479" y="457" width="1" height="25" fill="rgb(21,200,0)"/><rect x="480" y="457" width="1" height="25" fill="rgb(29,200,0)"/><rect x="481" y="457" width="1" height="25" fill="rgb(29,200,0)"/><rect x="482" y="457" width="1" height="25" fill="rgb(29,200,0)"/><rect x="483" y="457" width="1" height="25" fill="rgb(15,200,0)"/><rect x="484" y="441" width="1" height="41" fill="rgb(29,200,0)"/><rect x="485" y="433" width="1" height="49" fill="rgb(36,200,0)"/><rect x="486" y="433" width="1" height="49" fill="rgb(56,200,0)"/><rect x="487" y="457" width="1" height="25" fill="rgb(21,200,0)"/><rect x="488" y="465" width="1" height="17" fill="rgb(28,200,0)"/><rect x="489" y="457" width="1" height="25" fill="rgb(21,200,0)"/><rect x="490" y="457" width="1" height="25" fill="rgb(35,200,0)"/><rect x="491" y="457" width="1" height="25" fill="rgb(15,200,0)"/><rect x="492" y="457" width="1" height="25" fill="rgb(35,200,0)"/><rect x="493" y="457" width="1" height="25" fill="rgb(15,200,0)"/><rect x="494" y="457" width="1" height="25" fill="rgb(21,200,0)"/><rect x="495" y="449" width="1" height="33" fill="rgb(22,200,0)"/><rect x="496" y="457" width="1" height="25" fill="rgb(35,200,0)"/><rect x="497" y="465" width="1" height="17" fill="rgb(8,200,0)"/><rect x="498" y="457" width="1" height="25" fill="rgb(29,200,0)"/><rect x="499" y="457" width="1" height="25" fill="rgb(21,200,0)"/><rect x="500" y="457" width="1" height="25" fill="rgb(15,200,0)"/><rect x="501" y="457" width="1" height="25" fill="rgb(21,200,0)"/><rect x="502" y="457" width="1" height="25" fill="rgb(15,200,0)"/><rect x="503" y="457" width="1" height="25" fill="rgb(21,200,0)"/><rect x="504" y="457" width="1" height="25" fill="rgb(21,200,0)"/><rect x="505" y="457" width="1" height="25" fill="rgb(21,200,0)"/><rect x="506" y="465" width="1" height="17" fill="rgb(8,200,0)"/><rect x="507" y="457" width="1" height="25" fill="rgb(15,200,0)"/><rect x="508" y="457" width="1" height="25" fill="rgb(35,200,0)"/><rect x="509" y="465" width="1" height="17" fill="rgb(28,200,0)"/><rect x="510" y="449" width="1" height="33" fill="rgb(28,200,0)"/><rect x="511" y="441" width="1" height="41" fill="rgb(29,200,0)"/><rect x="512" y="449" width="1" height="33" fill="rgb(36,200,0)"/><rect x="513" y="449" width="1" height="33" fill="rgb(42,200,0)"/><rect x="514" y="465" width="1" height="17" fill="rgb(28,200,0)"/><rect x="515" y="465" width="1" height="17" fill="rgb(14,200,0)"/><rect x="516" y="449" width="1" height="33" fill="rgb(36,200,0)"/><rect x="517" y="384" width="1" height="98" fill="rgb(150,200,0)"/><rect x="517" y="408" width="1" height="74" fill="rgb(125,200,0)"/><rect x="518" y="367" width="1" height="115" fill="rgb(200,200,0)"/><rect x="518" y="407" width="1" height="75" fill="rgb(140,200,0)"/><rect x="519" y="384" width="1" height="98" fill="rgb(150,200,0)"/><rect x="520" y="367" width="1" height="115" fill="rgb(186,200,0)"/><rect x="521" y="359" width="1" height="123" fill="rgb(214,200,0)"/><rect x="522" y="384" width="1" height="98" fill="rgb(156,200,0)"/><rect x="523" y="359" width="1" height="123" fill="rgb(200,200,0)"/><rect x="523" y="408" width="1" height="74" fill="rgb(125,200,0)"/><rect x="524" y="375" width="1" height="107" fill="rgb(185,200,0)"/><rect x="524" y="410" width="1" height="72" fill="rgb(125,200,0)"/><rect x="525" y="367" width="1" height="115" fill="rgb(186,200,0)"/><rect x="525" y="408" width="1" height="74" fill="rgb(110,200,0)"/><rect x="526" y="375" width="1" height="107" fill="rgb(171,200,0)"/><rect x="526" y="410" width="1" height="72" fill="rgb(140,200,0)"/><rect x="527" y="367" width="1" height="115" fill="rgb(194,200,0)"/><rect x="527" y="408" width="1" height="74" fill="rgb(110,200,0)"/><rect x="528" y="375" width="1" height="107" fill="rgb(171,200,0)"/><rect x="528" y="408" width="1" height="74" fill="rgb(125,200,0)"/><rect x="529" y="359" width="1" height="123" fill="rgb(200,200,0)"/><rect x="529" y="407" width="1" height="75" fill="rgb(125,200,0)"/><rect x="530" y="375" width="1" height="107" fill="rgb(165,200,0)"/><rect x="531" y="375" width="1" height="107" fill="rgb(171,200,0)"/><rect x="532" y="384" width="1" height="98" fill="rgb(170,200,0)"/><rect x="533" y="384" width="1" height="98" fill="rgb(164,200,0)"/><rect x="534" y="367" width="1" height="115" fill="rgb(200,200,0)"/><rect x="534" y="410" width="1" height="72" fill="rgb(125,200,0)"/><rect x="535" y="384" width="1" height="98" fill="rgb(150,200,0)"/><rect x="535" y="407" width="1" height="75" fill="rgb(125,200,0)"/><rect x="536" y="384" width="1" height="98" fill="rgb(156,200,0)"/><rect x="537" y="392" width="1" height="90" fill="rgb(141,200,0)"/><rect x="538" y="384" width="1" height="98" fill="rgb(170,200,0)"/><rect x="539" y="400" width="1" height="82" fill="rgb(126,200,0)"/><rect x="540" y="384" width="1" height="98" fill="rgb(170,200,0)"/><rect x="540" y="410" width="1" height="72" fill="rgb(125,200,0)"/><rect x="541" y="400" width="1" height="82" fill="rgb(126,200,0)"/><rect x="541" y="407" width="1" height="75" fill="rgb(110,200,0)"/><rect x="542" y="457" width="1" height="25" fill="rgb(29,200,0)"/><rect x="543" y="457" width="1" height="25" fill="rgb(35,200,0)"/><rect x="544" y="465" width="1" height="17" fill="rgb(28,200,0)"/><rect x="545" y="457" width="1" height="25" fill="rgb(15,200,0)"/><rect x="546" y="465" width="1" height="17" fill="rgb(22,200,0)"/><rect x="547" y="465" width="1" height="17" fill="rgb(22,200,0)"/><rect x="548" y="465" width="1" height="17" fill="rgb(28,200,0)"/><rect x="549" y="457" width="1" height="25" fill="rgb(21,200,0)"/><rect x="550" y="449" width="1" height="33" fill="rgb(36,200,0)"/><rect x="551" y="457" width="1" height="25" fill="rgb(21,200,0)"/><rect x="552" y="457" width="1" height="25" fill="rgb(35,200,0)"/><rect x="553" y="457" width="1" height="25" fill="rgb(35,200,0)"/><rect x="554" y="457" width="1" height="25" fill="rgb(15,200,0)"/><rect x="555" y="457" width="1" height="25" fill="rgb(29,200,0)"/><rect x="556" y="457" width="1" height="25" fill="rgb(29,200,0)"/><rect x="557" y="457" width="1" height="25" fill="rgb(29,200,0)"/><rect x="558" y="465" width="1" height="17" fill="rgb(14,200,0)"/><rect x="559" y="457" width="1" height="25" fill="rgb(21,200,0)"/><rect x="560" y="457" width="1" height="25" fill="rgb(21,200,0)"/><rect x="561" y="457" width="1" height="25" fill="rgb(21,200,0)"/><rect x="562" y="457" width="1" height="25" fill="rgb(29,200,0)"/><rect x="563" y="457" width="1" height="25" fill="rgb(35,200,0)"/><rect x="564" y="457" width="1" height="25" fill="rgb(35,200,0)"/><rect x="565" y="457" width="1" height="25" fill="rgb(35,200,0)"/><rect x="566" y="457" width="1" height="25" fill="rgb(29,200,0)"/><rect x="567" y="457" width="1" height="25" fill="rgb(21,200,0)"/><rect x="568" y="457" width="1" height="25" fill="rgb(15,200,0)"/><rect x="569" y="457" width="1" height="25" fill="rgb(29,200,0)"/><rect x="570" y="457" width="1" height="25" fill="rgb(29,200,0)"/><rect x="571" y="457" width="1" height="25" fill="rgb(29,200,0)"/><rect x="572" y="457" width="1" height="25" fill="rgb(21,200,0)"/><rect x="573" y="457" width="1" height="25" fill="rgb(21,200,0)"/><rect x="574" y="457" width="1" height="25" fill="rgb(35,200,0)"/><rect x="575" y="457" width="1" height="25" fill="rgb(21,200,0)"/><rect x="576" y="457" width="1" height="25" fill="rgb(21,200,0)"/><rect x="577" y="457" width="1" height="25" fill="rgb(29,200,0)"/><rect x="578" y="465" width="1" height="17" fill="rgb(28,200,0)"/><rect x="579" y="465" width="1" height="17" fill="rgb(22,200,0)"/><rect x="580" y="457" width="1" height="25" fill="rgb(35,200,0)"/><rect x="581" y="457" width="1" height="25" fill="rgb(21,200,0)"/><rect x="582" y="457" width="1" height="25" fill="rgb(15,200,0)"/><rect x="583" y="457" width="1" height="25" fill="rgb(21,200,0)"/><rect x="584" y="457" width="1" height="25" fill="rgb(21,200,0)"/><rect x="585" y="457" width="1" height="25" fill="rgb(35,200,0)"/><rect x="586" y="457" width="1" height="25" fill="rgb(21,200,0)"/><rect x="587" y="457" width="1" height="25" fill="rgb(21,200,0)"/><rect x="588" y="449" width="1" height="33" fill="rgb(28,200,0)"/><rect x="589" y="457" width="1" height="25" fill="rgb(29,200,0)"/><rect x="590" y="457" width="1" height="25" fill="rgb(15,200,0)"/><rect x="591" y="457" width="1" height="25" fill="rgb(15,200,0)"/><rect x="592" y="457" width="1" height="25" fill="rgb(15,200,0)"/><rect x="593" y="457" width="1" height="25" fill="rgb(21,200,0)"/><rect x="594" y="457" width="1" height="25" fill="rgb(35,200,0)"/><rect x="595" y="457" width="1" height="25" fill="rgb(29,200,0)"/><rect x="596" y="465" width="1" height="17" fill="rgb(14,200,0)"/><rect x="597" y="457" width="1" height="25" fill="rgb(35,200,0)"/><rect x="598" y="449" width="1" height="33" fill="rgb(28,200,0)"/><rect x="599" y="449" width="1" height="33" fill="rgb(42,200,0)"/><rect x="600" y="457" width="1" height="25" fill="rgb(35,200,0)"/><rect x="601" y="457" width="1" height="25" fill="rgb(29,200,0)"/><rect x="602" y="457" width="1" height="25" fill="rgb(35,200,0)"/><rect x="603" y="457" width="1" height="25" fill="rgb(35,200,0)"/><rect x="604" y="457" width="1" height="25" fill="rgb(29,200,0)"/><rect x="605" y="449" width="1" height="33" fill="rgb(36,200,0)"/><rect x="606" y="457" width="1" height="25" fill="rgb(29,200,0)"/><rect x="607" y="457" width="1" height="25" fill="rgb(21,200,0)"/><rect x="608" y="457" width="1" height="25" fill="rgb(15,200,0)"/><rect x="609" y="457" width="1" height="25" fill="rgb(35,200,0)"/><rect x="610" y="449" width="1" height="33" fill="rgb(28,200,0)"/><rect x="611" y="449" width="1" height="33" fill="rgb(36,200,0)"/><rect x="612" y="457" width="1" height="25" fill="rgb(15,200,0)"/><rect x="613" y="457" width="1" height="25" fill="rgb(15,200,0)"/><rect x="614" y="441" width="1" height="41" fill="rgb(49,200,0)"/><rect x="615" y="457" width="1" height="25" fill="rgb(21,200,0)"/><rect x="616" y="433" width="1" height="49" fill="rgb(36,200,0)"/><rect x="617" y="457" width="1" height="25" fill="rgb(29,200,0)"/><rect x="618" y="457" width="1" height="25" fill="rgb(21,200,0)"/><rect x="619" y="457" width="1" height="25" fill="rgb(35,200,0)"/><rect x="620" y="449" width="1" height="33" fill="rgb(36,200,0)"/><rect x="621" y="465" width="1" height="17" fill="rgb(28,200,0)"/><rect x="622" y="457" width="1" height="25" fill="rgb(35,200,0)"/><rect x="623" y="457" width="1" height="25" fill="rgb(21,200,0)"/><rect x="624" y="457" width="1" height="25" fill="rgb(21,200,0)"/><rect x="625" y="457" width="1" height="25" fill="rgb(29,200,0)"/><rect x="626" y="457" width="1" height="25" fill="rgb(29,200,0)"/><rect x="627" y="457" width="1" height="25" fill="rgb(29,200,0)"/><rect x="628" y="449" width="1" height="33" fill="rgb(36,200,0)"/><rect x="629" y="449" width="1" height="33" fill="rgb(42,200,0)"/><rect x="630" y="457" width="1" height="25" fill="rgb(35,200,0)"/><rect x="631" y="457" width="1" height="25" fill="rgb(21,200,0)"/><rect x="632" y="457" width="1" height="25" fill="rgb(35,200,0)"/><rect x="633" y="457" width="1" height="25" fill="rgb(15,200,0)"/><rect x="634" y="465" width="1" height="17" fill="rgb(14,200,0)"/><rect x="635" y="457" width="1" height="25" fill="rgb(21,200,0)"/><rect x="636" y="449" width="1" height="33" fill="rgb(28,200,0)"/><rect x="637" y="465" width="1" height="17" fill="rgb(14,200,0)"/><rect x="638" y="457" width="1" height="25" fill="rgb(15,200,0)"/><rect x="639" y="449" width="1" height="33" fill="rgb(28,200,0)"/><rect x="640" y="449" width="1" height="33" fill="rgb(42,200,0)"/><rect x="641" y="457" width="1" height="25" fill="rgb(21,200,0)"/><rect x="642" y="457" width="1" height="25" fill="rgb(15,200,0)"/><rect x="643" y="449" width="1" height="33" fill="rgb(28,200,0)"/><rect x="644" y="465" width="1" height="17" fill="rgb(14,200,0)"/><rect x="645" y="457" width="1" height="25" fill="rgb(35,200,0)"/><rect x="646" y="457" width="1" height="25" fill="rgb(29,200,0)"/><rect x="647" y="441" width="1" height="41" fill="rgb(35,200,0)"/><rect x="648" y="465" width="1" height="17" fill="rgb(28,200,0)"/><rect x="649" y="457" width="1" height="25" fill="rgb(21,200,0)"/><rect x="650" y="449" width="1" height="33" fill="rgb(42,200,0)"/><rect x="651" y="457" width="1" height="25" fill="rgb(21,200,0)"/><rect x="652" y="457" width="1" height="25" fill="rgb(35,200,0)"/><rect x="653" y="457" width="1" height="25" fill="rgb(21,200,0)"/><rect x="654" y="457" width="1" height="25" fill="rgb(29,200,0)"/><rect x="655" y="457" width="1" height="25" fill="rgb(21,200,0)"/><rect x="656" y="457" width="1" height="25" fill="rgb(15,200,0)"/><rect x="657" y="457" width="1" height="25" fill="rgb(35,200,0)"/><rect x="658" y="457" width="1" height="25" fill="rgb(35,200,0)"/><rect x="659" y="457" width="1" height="25" fill="rgb(15,200,0)"/><rect x="660" y="457" width="1" height="25" fill="rgb(21,200,0)"/><rect x="661" y="449" width="1" height="33" fill="rgb(42,200,0)"/><rect x="662" y="457" width="1" height="25" fill="rgb(15,200,0)"/><rect x="663" y="465" width="1" height="17" fill="rgb(22,200,0)"/><rect x="664" y="465" width="1" height="17" fill="rgb(8,200,0)"/><rect x="665" y="449" width="1" height="33" fill="rgb(22,200,0)"/><rect x="666" y="449" width="1" height="33" fill="rgb(28,200,0)"/><rect x="667" y="449" width="1" height="33" fill="rgb(42,200,0)"/><rect x="668" y="449" width="1" height="33" fill="rgb(22,200,0)"/><rect x="669" y="449" width="1" height="33" fill="rgb(28,200,0)"/><rect x="670" y="449" width="1" height="33" fill="rgb(36,200,0)"/><rect x="671" y="449" width="1" height="33" fill="rgb(22,200,0)"/><rect x="672" y="449" width="1" height="33" fill="rgb(42,200,0)"/><rect x="673" y="441" width="1" height="41" fill="rgb(29,200,0)"/><rect x="674" y="441" width="1" height="41" fill="rgb(29,200,0)"/><rect x="675" y="441" width="1" height="41" fill="rgb(35,200,0)"/><rect x="676" y="441" width="1" height="41" fill="rgb(35,200,0)"/><rect x="677" y="449" width="1" height="33" fill="rgb(36,200,0)"/><rect x="678" y="441" width="1" height="41" fill="rgb(49,200,0)"/><rect x="679" y="441" width="1" height="41" fill="rgb(49,200,0)"/><rect x="680" y="441" width="1" height="41" fill="rgb(35,200,0)"/><rect x="681" y="441" width="1" height="41" fill="rgb(49,200,0)"/><rect x="682" y="449" width="1" height="33" fill="rgb(42,200,0)"/><rect x="683" y="441" width="1" height="41" fill="rgb(35,200,0)"/><rect x="684" y="441" width="1" height="41" fill="rgb(49,200,0)"/><rect x="685" y="441" width="1" height="41" fill="rgb(35,200,0)"/><rect x="686" y="441" width="1" height="41" fill="rgb(43,200,0)"/><rect x="687" y="441" width="1" height="41" fill="rgb(49,200,0)"/><rect x="688" y="441" width="1" height="41" fill="rgb(29,200,0)"/><rect x="689" y="441" width="1" height="41" fill="rgb(35,200,0)"/><rect x="690" y="441" width="1" height="41" fill="rgb(35,200,0)"/><rect x="691" y="441" width="1" height="41" fill="rgb(49,200,0)"/><rect x="692" y="441" width="1" height="41" fill="rgb(49,200,0)"/><rect x="693" y="449" width="1" height="33" fill="rgb(22,200,0)"/><rect x="694" y="449" width="1" height="33" fill="rgb(22,200,0)"/><rect x="695" y="457" width="1" height="25" fill="rgb(15,200,0)"/><rect x="696" y="441" width="1" height="41" fill="rgb(29,200,0)"/><rect x="697" y="433" width="1" height="49" fill="rgb(42,200,0)"/><rect x="698" y="441" width="1" height="41" fill="rgb(49,200,0)"/><rect x="699" y="441" width="1" height="41" fill="rgb(43,200,0)"/><rect x="700" y="441" width="1" height="41" fill="rgb(43,200,0)"/><rect x="701" y="424" width="1" height="58" fill="rgb(95,200,0)"/><rect x="702" y="441" width="1" height="41" fill="rgb(43,200,0)"/><rect x="703" y="408" width="1" height="74" fill="rgb(105,200,0)"/><rect x="704" y="441" width="1" height="41" fill="rgb(29,200,0)"/><rect x="705" y="441" width="1" height="41" fill="rgb(49,200,0)"/><rect x="706" y="449" width="1" height="33" fill="rgb(28,200,0)"/><rect x="707" y="449" width="1" height="33" fill="rgb(28,200,0)"/><rect x="708" y="441" width="1" height="41" fill="rgb(35,200,0)"/><rect x="709" y="449" width="1" height="33" fill="rgb(28,200,0)"/><rect x="710" y="441" width="1" height="41" fill="rgb(35,200,0)"/><rect x="711" y="441" width="1" height="41" fill="rgb(35,200,0)"/><rect x="712" y="441" width="1" height="41" fill="rgb(29,200,0)"/><rect x="713" y="441" width="1" height="41" fill="rgb(35,200,0)"/><rect x="190" y="482" width="524" height="1" fill="#9494ff"/><rect x="713" y="318" width="1" height="163" fill="#900090"/><rect x="189" y="317" width="583" height="1" fill="#000"/><rect x="189" y="317" width="1" height="165" fill="#000"/><rect x="771" y="317" width="1" height="166" fill="#000"/></svg>
<span class="t" style="left:167.95px;top:261.05px;font-size:11px;color:#000;">100</span>
<div class="b" style="left:186px;top:267px;width:3px;height:1px;background:#303030;"></div>
<span class="t" style="left:774.40px;top:261.05px;font-size:11px;color:#000;">1 X</span>
<div class="b" style="left:772px;top:267px;width:3px;height:1px;background:#303030;"></div>
<span class="t" style="left:167.95px;top:241.04px;font-size:11px;color:#000;">200</span>
<div class="b" style="left:186px;top:247px;width:3px;height:1px;background:#303030;"></div>
<span class="t" style="left:774.40px;top:241.04px;font-size:11px;color:#000;">2 X</span>
<div class="b" style="left:772px;top:247px;width:3px;height:1px;background:#303030;"></div>
<span class="t" style="left:167.95px;top:220.04px;font-size:11px;color:#000;">300</span>
<div class="b" style="left:186px;top:226px;width:3px;height:1px;background:#303030;"></div>
<span class="t" style="left:774.40px;top:220.04px;font-size:11px;color:#000;">3 X</span>
<div class="b" style="left:772px;top:226px;width:3px;height:1px;background:#303030;"></div>
<span class="t" style="left:167.95px;top:200.04px;font-size:11px;color:#000;">400</span>
<div class="b" style="left:186px;top:206px;width:3px;height:1px;background:#303030;"></div>
<span class="t" style="left:774.40px;top:200.04px;font-size:11px;color:#000;">4 X</span>
<div class="b" style="left:772px;top:206px;width:3px;height:1px;background:#303030;"></div>
<span class="t" style="left:167.95px;top:180.04px;font-size:11px;color:#000;">500</span>
<div class="b" style="left:186px;top:186px;width:3px;height:1px;background:#303030;"></div>
<span class="t" style="left:774.40px;top:180.04px;font-size:11px;color:#000;">5 X</span>
<div class="b" style="left:772px;top:186px;width:3px;height:1px;background:#303030;"></div>
<span class="t" style="left:167.95px;top:159.04px;font-size:11px;color:#000;">600</span>
<div class="b" style="left:186px;top:165px;width:3px;height:1px;background:#303030;"></div>
<span class="t" style="left:774.40px;top:159.04px;font-size:11px;color:#000;">6 X</span>
<div class="b" style="left:772px;top:165px;width:3px;height:1px;background:#303030;"></div>
<span class="t" style="left:167.95px;top:139.04px;font-size:11px;color:#000;">700</span>
<div class="b" style="left:186px;top:145px;width:3px;height:1px;background:#303030;"></div>
<span class="t" style="left:774.40px;top:139.04px;font-size:11px;color:#000;">7 X</span>
<div class="b" style="left:772px;top:145px;width:3px;height:1px;background:#303030;"></div>
<span class="t" style="left:167.95px;top:118.05px;font-size:11px;color:#000;">800</span>
<div class="b" style="left:186px;top:124px;width:3px;height:1px;background:#303030;"></div>
<span class="t" style="left:774.40px;top:118.05px;font-size:11px;color:#000;">8 X</span>
<div class="b" style="left:772px;top:124px;width:3px;height:1px;background:#303030;"></div>
<span class="t" style="left:180.18px;top:435.05px;font-size:11px;color:#000;">5</span>
<div class="b" style="left:186px;top:441px;width:3px;height:1px;background:#303030;"></div>
<span class="t" style="left:174.07px;top:394.05px;font-size:11px;color:#000;">10</span>
<div class="b" style="left:186px;top:400px;width:3px;height:1px;background:#303030;"></div>
<span class="t" style="left:174.07px;top:353.05px;font-size:11px;color:#000;">15</span>
<div class="b" style="left:186px;top:359px;width:3px;height:1px;background:#303030;"></div>
<span class="t" style="left:174.07px;top:312.05px;font-size:11px;color:#000;">20</span>
<div class="b" style="left:186px;top:318px;width:3px;height:1px;background:#303030;"></div>
<span class="t" style="left:774.40px;top:442.05px;font-size:11px;color:#000;">2%</span>
<span class="t" style="left:774.40px;top:409.05px;font-size:11px;color:#000;">4%</span>
<span class="t" style="left:774.40px;top:377.05px;font-size:11px;color:#000;">6%</span>
<span class="t" style="left:774.40px;top:344.05px;font-size:11px;color:#000;">8%</span>
<span class="t" style="left:774.40px;top:312.05px;font-size:11px;color:#000;">10%</span>
<span class="t" style="left:181.95px;top:287.75px;font-size:11px;color:#000;">0.0</span>
<span class="t" style="left:239.95px;top:287.75px;font-size:11px;color:#000;">2.5</span>
<span class="t" style="left:297.95px;top:287.75px;font-size:11px;color:#000;">5.0</span>
<span class="t" style="left:355.95px;top:287.75px;font-size:11px;color:#000;">7.5</span>
<span class="t" style="left:410.90px;top:287.75px;font-size:11px;color:#000;">10.0</span>
<span class="t" style="left:468.90px;top:287.75px;font-size:11px;color:#000;">12.5</span>
<span class="t" style="left:526.90px;top:287.75px;font-size:11px;color:#000;">15.0</span>
<span class="t" style="left:584.90px;top:287.75px;font-size:11px;color:#000;">17.5</span>
<span class="t" style="left:642.90px;top:287.75px;font-size:11px;color:#000;">20.0</span>
<span class="t" style="left:700.90px;top:287.75px;font-size:11px;color:#000;">22.5</span>
<span class="t" style="left:749.60px;top:287.75px;font-size:11px;color:#000;">25.0 GB</span>
<div class="b" style="left:189px;top:288.0px;width:1px;height:1px;background:#000;"></div>
<span class="t" style="left:181.95px;top:482.25px;font-size:11px;color:#000;">0.0</span>
<span class="t" style="left:239.95px;top:482.25px;font-size:11px;color:#000;">2.5</span>
<span class="t" style="left:297.95px;top:482.25px;font-size:11px;color:#000;">5.0</span>
<span class="t" style="left:355.95px;top:482.25px;font-size:11px;color:#000;">7.5</span>
<span class="t" style="left:410.90px;top:482.25px;font-size:11px;color:#000;">10.0</span>
<span class="t" style="left:468.90px;top:482.25px;font-size:11px;color:#000;">12.5</span>
<span class="t" style="left:526.90px;top:482.25px;font-size:11px;color:#000;">15.0</span>
<span class="t" style="left:584.90px;top:482.25px;font-size:11px;color:#000;">17.5</span>
<span class="t" style="left:642.90px;top:482.25px;font-size:11px;color:#000;">20.0</span>
<span class="t" style="left:700.90px;top:482.25px;font-size:11px;color:#000;">22.5</span>
<span class="t" style="left:749.60px;top:482.25px;font-size:11px;color:#000;">25.0 GB</span>
<div class="b" style="left:189px;top:482.5px;width:1px;height:1px;background:#000;"></div>
<div class="b" style="left:191px;top:113px;width:6px;height:8px;background:#008000;"></div>
<span class="t" style="left:199.50px;top:111.05px;font-size:11px;color:#000;transform:scaleX(0.9180);">LDC</span>
<div class="b" style="left:223px;top:113px;width:6px;height:8px;background:#00ffff;"></div>
<span class="t" style="left:231.80px;top:111.05px;font-size:11px;color:#000;transform:scaleX(0.9693);">Read speed</span>
<div class="b" style="left:293px;top:113px;width:6px;height:8px;background:#808080;"></div>
<span class="t" style="left:301.40px;top:111.05px;font-size:11px;color:#000;transform:scaleX(0.9917);">Write speed</span>
<div class="b" style="left:191px;top:307px;width:6px;height:8px;background:#008000;"></div>
<span class="t" style="left:199.50px;top:305.05px;font-size:11px;color:#000;transform:scaleX(0.9137);">BIS</span>
<div class="b" style="left:219px;top:307px;width:6px;height:8px;background:#8080ff;"></div>
<span class="t" style="left:227.70px;top:305.05px;font-size:11px;color:#000;transform:scaleX(0.9524);">Jitter</span>
<div class="b" style="left:254px;top:304px;width:6px;height:3px;background:#000;"></div>
<span class="t s" style="left:251.90px;top:502.05px;font-size:11px;color:#000;transform:scaleX(0.9134);">LDC</span>
<span class="t s" style="left:310.80px;top:502.05px;font-size:11px;color:#000;transform:scaleX(0.8686);">BIS</span>
<span class="t s" style="left:162.60px;top:518.54px;font-size:11px;color:#000;transform:scaleX(1.0451);">Avg</span>
<span class="t s" style="left:162.90px;top:535.04px;font-size:11px;color:#000;transform:scaleX(1.0250);">Max</span>
<span class="t s" style="left:161.10px;top:551.04px;font-size:11px;color:#000;transform:scaleX(1.0373);">Total</span>
<span class="t s" style="left:245.40px;top:518.54px;font-size:11px;color:#0a0aff;transform:scaleX(0.9846);">34.82</span>
<span class="t s" style="left:255.40px;top:535.04px;font-size:11px;color:#0a0aff;transform:scaleX(0.9318);">733</span>
<span class="t s" style="left:224.40px;top:551.04px;font-size:11px;color:#0a0aff;transform:scaleX(0.9829);">12866168</span>
<span class="t s" style="left:305.40px;top:518.54px;font-size:11px;color:#0a0aff;transform:scaleX(1.0090);">0.42</span>
<span class="t s" style="left:315.10px;top:535.04px;font-size:11px;color:#0a0aff;transform:scaleX(0.9727);">15</span>
<span class="t s" style="left:291.20px;top:551.04px;font-size:11px;color:#0a0aff;transform:scaleX(0.9754);">154739</span>
<div class="b" style="left:395px;top:502px;width:13px;height:13px;background:#fff;border:1px solid #333;box-sizing:border-box;"></div>
<svg class="b" style="left:395px;top:502px" width="13" height="13" viewBox="0 0 13 13"><path d="M2.3 6.6 L5 9.4 L11 3" fill="none" stroke="#3a3a3a" stroke-width="1.1"/></svg>
<span class="t s" style="left:416.70px;top:503.05px;font-size:11px;color:#000;transform:scaleX(1.0698);">Jitter</span>
<span class="t s" style="left:413.90px;top:518.54px;font-size:11px;color:#0a0aff;transform:scaleX(0.9849);">-0.1%</span>
<span class="t s" style="left:417.40px;top:535.04px;font-size:11px;color:#0a0aff;transform:scaleX(0.9892);">0.0%</span>
<span class="t s" style="left:608.90px;top:507.05px;font-size:11px;color:#000;transform:scaleX(1.0155);">Speed</span>
<span class="t s" style="left:668.40px;top:507.05px;font-size:11px;color:#0a0aff;transform:scaleX(0.9528);">6.18 X</span>
<span class="t s" style="left:608.90px;top:535.04px;font-size:11px;color:#000;transform:scaleX(1.0554);">Position</span>
<span class="t s" style="left:668.40px;top:535.04px;font-size:11px;color:#0a0aff;">23093 MB</span>
<span class="t s" style="left:608.90px;top:551.04px;font-size:11px;color:#000;transform:scaleX(0.9651);">Samples</span>
<span class="t s" style="left:668.40px;top:551.04px;font-size:11px;color:#0a0aff;transform:scaleX(0.9754);">365747</span>
<div class="b" style="left:723px;top:500px;width:75px;height:21px;background:#e1e1e1;border:1px solid #adadad;box-sizing:border-box;"></div>
<span class="t s" style="left:726.90px;top:504.65px;font-size:11px;color:#000;transform:scaleX(0.9461);">6.0 X</span>
<svg class="b" style="left:784.5px;top:508px" width="10" height="6" viewBox="0 0 10 6"><path d="M1 0.7 L5 4.7 L9 0.7" fill="none" stroke="#444" stroke-width="1.1"/></svg>
<div class="b" style="left:724px;top:524px;width:73px;height:21px;background:#e1e1e1;border:1px solid #adadad;box-sizing:border-box;"></div>
<span class="t s" style="left:737.80px;top:528.64px;font-size:11px;color:#000;transform:scaleX(1.0881);">Start full</span>
<div class="b" style="left:723px;top:551px;width:73px;height:21px;background:#e1e1e1;border:1px solid #adadad;box-sizing:border-box;"></div>
<span class="t s" style="left:734.90px;top:555.44px;font-size:11px;color:#000;transform:scaleX(1.0677);">Start part</span>
<div class="b" style="left:1px;top:580px;width:807px;height:19px;background:#f0f0f0;"></div>
<div class="b" style="left:1px;top:580px;width:807px;height:1px;background:#dcdcdc;"></div>
<span class="t s" style="left:3.80px;top:584.44px;font-size:11px;color:#000;transform:scaleX(0.9679);">Test completed</span>
<div class="b" style="left:141px;top:582px;width:1px;height:16px;background:#d4d4d4;"></div>
<div class="b" style="left:507px;top:582px;width:1px;height:16px;background:#d4d4d4;"></div>
<div class="b" style="left:631px;top:582px;width:1px;height:16px;background:#d4d4d4;"></div>
<div class="b" style="left:146px;top:584px;width:302px;height:13px;background:#06b025;border:1px solid #bcbcbc;box-sizing:border-box;"></div>
<span class="t s" style="left:453.70px;top:584.44px;font-size:11px;color:#000;transform:scaleX(0.9516);">100.0%</span>
<span class="t s" style="left:601.90px;top:584.44px;font-size:11px;color:#000;transform:scaleX(0.9737);">20:36</span>
<svg class="b" style="left:797px;top:588px" width="10" height="10" viewBox="0 0 10 10"><g fill="#bdbdbd"><rect x="7" y="1" width="2" height="2"/><rect x="4" y="4" width="2" height="2"/><rect x="7" y="4" width="2" height="2"/><rect x="1" y="7" width="2" height="2"/><rect x="4" y="7" width="2" height="2"/><rect x="7" y="7" width="2" height="2"/></g></svg>
<div class="b" style="left:0px;top:0px;width:809px;height:1px;background:#30343a;"></div>
<div class="b" style="left:0px;top:0px;width:1px;height:600px;background:#30343a;"></div>
<div class="b" style="left:808px;top:0px;width:1px;height:600px;background:#30343a;"></div>
<div class="b" style="left:0px;top:599px;width:809px;height:1px;background:#1a1a1a;"></div>
</body></html>
